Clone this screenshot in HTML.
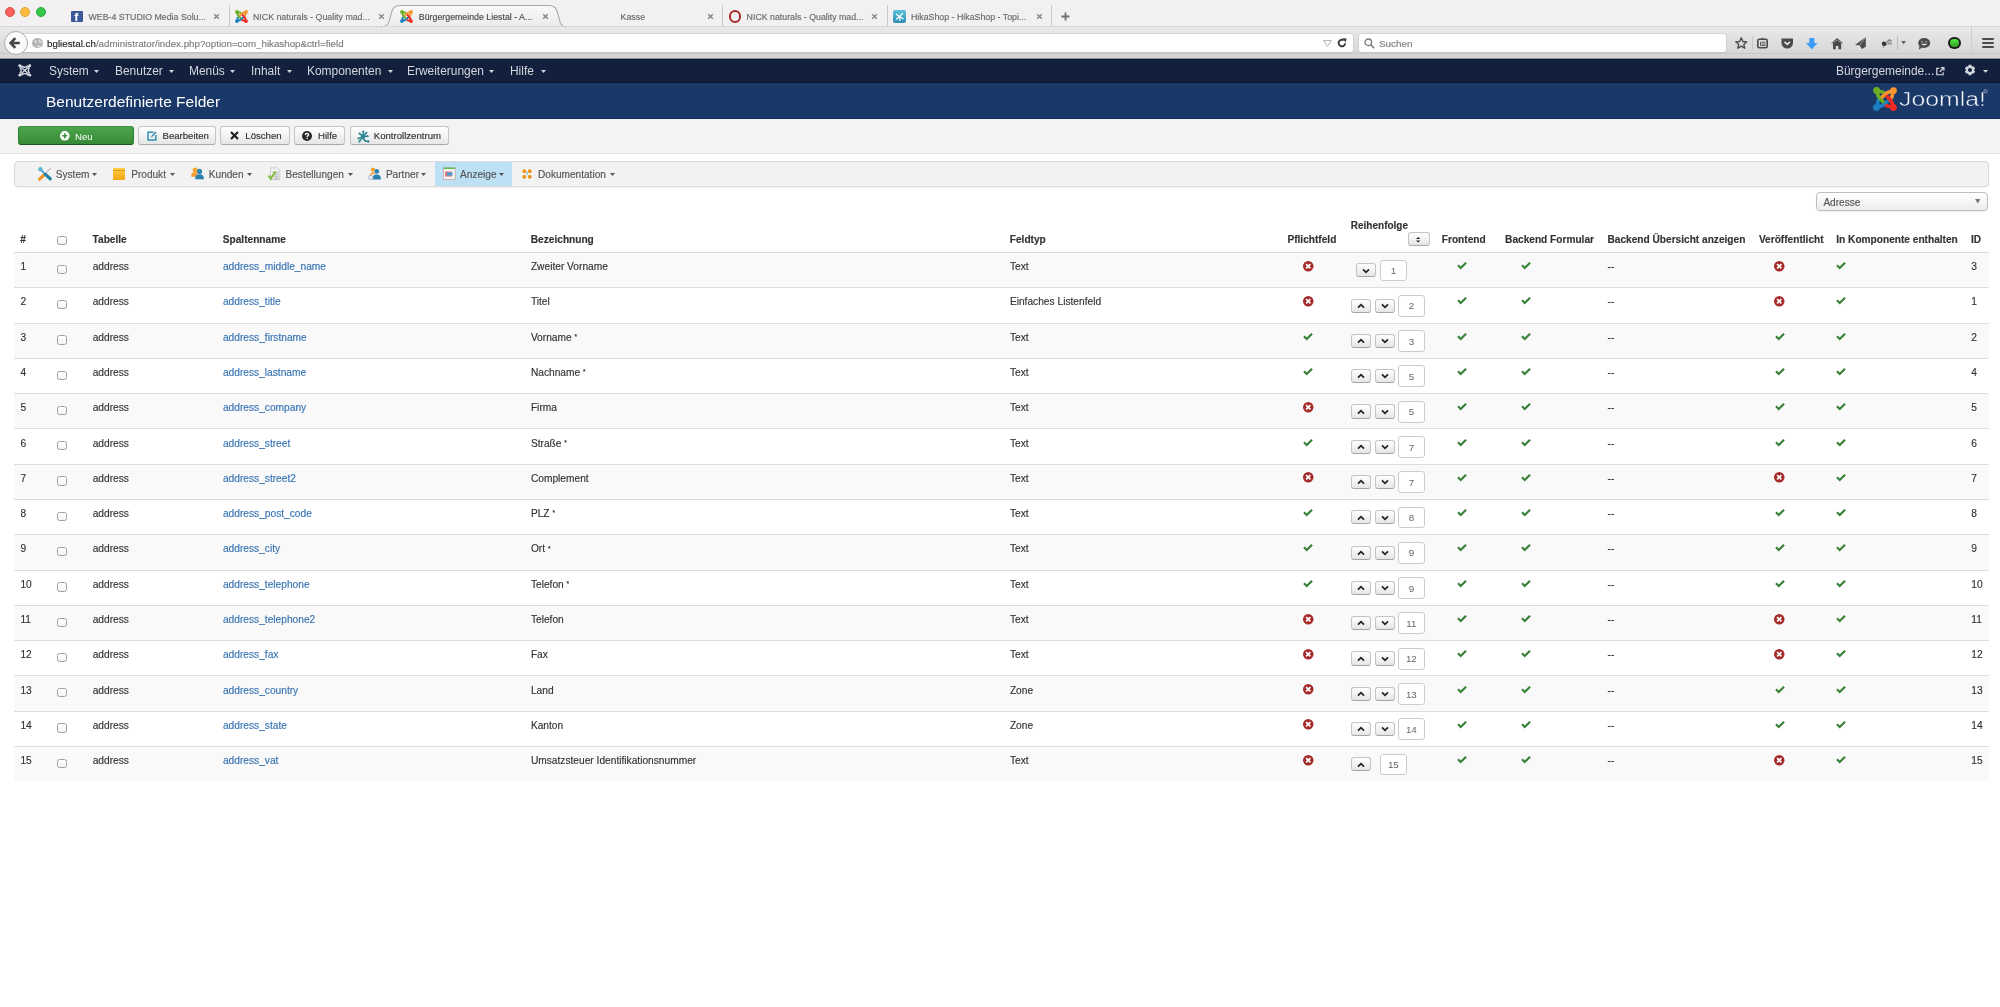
<!DOCTYPE html><html><head><meta charset="utf-8"><title>Benutzerdefinierte Felder</title><style>
*{box-sizing:border-box}
html,body{margin:0;padding:0;width:2000px;height:1007px;overflow:hidden;background:#fff;font-family:"Liberation Sans", sans-serif}
.a{position:absolute}
.t{position:absolute;white-space:nowrap;-webkit-text-stroke:0.15px currentColor}
svg{position:absolute;overflow:visible}
</style></head><body><div id="root" style="position:absolute;left:0;top:0;width:2000px;height:1007px;will-change:transform"><div class="a" style="left:0;top:0;width:2000px;height:26px;background:#f2f0f0"></div>
<div class="a" style="left:0;top:26px;width:2000px;height:1px;background:#d6d6d6"></div>
<div class="a" style="left:0;top:27px;width:2000px;height:32px;background:linear-gradient(#e9e9e9,#d3d3d3)"></div>
<div class="a" style="left:0;top:52.5px;width:2000px;height:1px;background:#c8c8c8"></div><div class="a" style="left:0;top:57px;width:2000px;height:1px;background:#dadada"></div><div class="a" style="left:0;top:58px;width:2000px;height:1px;background:#8a8f99"></div>
<div class="a" style="left:4.5px;top:6.5px;width:10px;height:10px;border-radius:50%;background:#fc605c;border:0.5px solid #de4c47"></div>
<div class="a" style="left:20px;top:6.5px;width:10px;height:10px;border-radius:50%;background:#fdbc40;border:0.5px solid #dea236"></div>
<div class="a" style="left:35.5px;top:6.5px;width:10px;height:10px;border-radius:50%;background:#34c84a;border:0.5px solid #27a83a"></div>
<svg style="left:0;top:0" width="2000" height="28"><defs><linearGradient id="tg" x1="0" y1="0" x2="0" y2="1"><stop offset="0" stop-color="#f8f8f8"/><stop offset="1" stop-color="#ebebeb"/></linearGradient></defs><path d="M381 26.8 C388 26.8 389 23 390.5 16 C392 9 394 5.5 400 5.5 L549 5.5 C555 5.5 557 9 558.5 16 C560 23 561 26.8 566 26.8 Z" fill="url(#tg)" stroke="#a9a9a9" stroke-width="1.1"/><rect x="382" y="26.4" width="183" height="1.6" fill="#ebebeb"/></svg>
<div class="a" style="left:228.5px;top:5px;width:1px;height:21px;background:#c9c7c7"></div>
<div class="a" style="left:722px;top:5px;width:1px;height:21px;background:#c9c7c7"></div>
<div class="a" style="left:886.5px;top:5px;width:1px;height:21px;background:#c9c7c7"></div>
<div class="a" style="left:1051px;top:5px;width:1px;height:21px;background:#c9c7c7"></div>
<div class="t" style="left:88.50px;top:12.75px;font-size:8.8px;line-height:8.8px;color:#6a6a6a;font-weight:400;">WEB-4 STUDIO Media Solu...</div>
<svg style="left:212.75px;top:13px" width="7" height="7" viewBox="0 0 7 7"><path d="M1.2 1.2L5.8 5.8M5.8 1.2L1.2 5.8" stroke="#858585" stroke-width="1.35"/></svg>
<div class="a" style="left:71px;top:11px;width:11.5px;height:11px;background:#3b5998;border-radius:1px"></div>
<div class="t" style="left:74.5px;top:11px;font-size:11px;line-height:13px;color:#fff;font-weight:700">f</div>
<div class="t" style="left:253.00px;top:12.75px;font-size:8.8px;line-height:8.8px;color:#6a6a6a;font-weight:400;">NICK naturals - Quality mad...</div>
<svg style="left:377.6px;top:13px" width="7" height="7" viewBox="0 0 7 7"><path d="M1.2 1.2L5.8 5.8M5.8 1.2L1.2 5.8" stroke="#858585" stroke-width="1.35"/></svg>
<svg style="left:235px;top:10px" width="13" height="13" viewBox="0 0 24 24"><g stroke-linecap="round" fill="none"><g transform="rotate(270 12 12)" fill="#1c7fbf"><g stroke="#1c7fbf"><circle stroke="none" cx="3.6" cy="3.5" r="3.4"/><path d="M3.7 3.8 L10.4 5.2" stroke-width="3.6"/><path d="M4 4 L5.2 9 L9.8 14.6" stroke-width="3.7" stroke-linejoin="round"/></g></g><g transform="rotate(0 12 12)" fill="#6aae24"><g stroke="#6aae24"><circle stroke="none" cx="3.6" cy="3.5" r="3.4"/><path d="M3.7 3.8 L10.4 5.2" stroke-width="3.6"/><path d="M4 4 L5.2 9 L9.8 14.6" stroke-width="3.7" stroke-linejoin="round"/></g></g><g transform="rotate(90 12 12)" fill="#f9962f"><g stroke="#f9962f"><circle stroke="none" cx="3.6" cy="3.5" r="3.4"/><path d="M3.7 3.8 L10.4 5.2" stroke-width="3.6"/><path d="M4 4 L5.2 9 L9.8 14.6" stroke-width="3.7" stroke-linejoin="round"/></g></g><g transform="rotate(180 12 12)" fill="#ee2b24"><g stroke="#ee2b24"><circle stroke="none" cx="3.6" cy="3.5" r="3.4"/><path d="M3.7 3.8 L10.4 5.2" stroke-width="3.6"/><path d="M4 4 L5.2 9 L9.8 14.6" stroke-width="3.7" stroke-linejoin="round"/></g></g></g></svg>
<div class="t" style="left:418.85px;top:12.75px;font-size:8.8px;line-height:8.8px;color:#4a4a4a;font-weight:400;">Bürgergemeinde Liestal - A...</div>
<svg style="left:542px;top:13px" width="7" height="7" viewBox="0 0 7 7"><path d="M1.2 1.2L5.8 5.8M5.8 1.2L1.2 5.8" stroke="#858585" stroke-width="1.35"/></svg>
<svg style="left:399.6px;top:10px" width="13" height="13" viewBox="0 0 24 24"><g stroke-linecap="round" fill="none"><g transform="rotate(270 12 12)" fill="#1c7fbf"><g stroke="#1c7fbf"><circle stroke="none" cx="3.6" cy="3.5" r="3.4"/><path d="M3.7 3.8 L10.4 5.2" stroke-width="3.6"/><path d="M4 4 L5.2 9 L9.8 14.6" stroke-width="3.7" stroke-linejoin="round"/></g></g><g transform="rotate(0 12 12)" fill="#6aae24"><g stroke="#6aae24"><circle stroke="none" cx="3.6" cy="3.5" r="3.4"/><path d="M3.7 3.8 L10.4 5.2" stroke-width="3.6"/><path d="M4 4 L5.2 9 L9.8 14.6" stroke-width="3.7" stroke-linejoin="round"/></g></g><g transform="rotate(90 12 12)" fill="#f9962f"><g stroke="#f9962f"><circle stroke="none" cx="3.6" cy="3.5" r="3.4"/><path d="M3.7 3.8 L10.4 5.2" stroke-width="3.6"/><path d="M4 4 L5.2 9 L9.8 14.6" stroke-width="3.7" stroke-linejoin="round"/></g></g><g transform="rotate(180 12 12)" fill="#ee2b24"><g stroke="#ee2b24"><circle stroke="none" cx="3.6" cy="3.5" r="3.4"/><path d="M3.7 3.8 L10.4 5.2" stroke-width="3.6"/><path d="M4 4 L5.2 9 L9.8 14.6" stroke-width="3.7" stroke-linejoin="round"/></g></g></g></svg>
<div class="t" style="left:620.60px;top:12.75px;font-size:8.8px;line-height:8.8px;color:#6a6a6a;font-weight:400;">Kasse</div>
<svg style="left:707px;top:13px" width="7" height="7" viewBox="0 0 7 7"><path d="M1.2 1.2L5.8 5.8M5.8 1.2L1.2 5.8" stroke="#858585" stroke-width="1.35"/></svg>
<div class="t" style="left:746.60px;top:12.75px;font-size:8.8px;line-height:8.8px;color:#6a6a6a;font-weight:400;">NICK naturals - Quality mad...</div>
<svg style="left:871px;top:13px" width="7" height="7" viewBox="0 0 7 7"><path d="M1.2 1.2L5.8 5.8M5.8 1.2L1.2 5.8" stroke="#858585" stroke-width="1.35"/></svg>
<div class="a" style="left:728.6px;top:10px;width:12.6px;height:12.6px;border-radius:50%;border:2.6px solid #a52a2a;background:transparent"></div>
<div class="t" style="left:911.00px;top:12.75px;font-size:8.8px;line-height:8.8px;color:#6a6a6a;font-weight:400;">HikaShop - HikaShop - Topi...</div>
<svg style="left:1036px;top:13px" width="7" height="7" viewBox="0 0 7 7"><path d="M1.2 1.2L5.8 5.8M5.8 1.2L1.2 5.8" stroke="#858585" stroke-width="1.35"/></svg>
<div class="a" style="left:893px;top:10px;width:12.7px;height:12.7px;border-radius:2px;background:linear-gradient(#5ac2dc,#2c8fb0)"></div>
<svg style="left:893px;top:10px" width="13" height="13" viewBox="0 0 13 13"><path d="M3 4L6.5 6.5M10 3L6.5 6.5L7 11M3 9.5L6.5 6.5L10.5 9" stroke="#fff" stroke-width="1.2" fill="none"/></svg>
<svg style="left:1060.7px;top:12px" width="9" height="9" viewBox="0 0 9 9"><path d="M4.5 0.5V8.5M0.5 4.5H8.5" stroke="#6f6f6f" stroke-width="1.8"/></svg>
<div class="a" style="left:20px;top:34px;width:1332.5px;height:18px;background:#fff;border-radius:2px;box-shadow:0 0 0 0.5px #c3c3c3, 0 1px 1px rgba(0,0,0,0.08)"></div>
<div class="a" style="left:3.5px;top:31px;width:24px;height:24px;border-radius:50%;background:#fafafa;border:1px solid #a9a9a9"></div>
<svg style="left:9.3px;top:37.2px" width="12" height="12" viewBox="0 0 12 12"><path d="M6.3 1.2L1.6 6L6.3 10.8M2 6H10.8" stroke="#444" stroke-width="2.6" fill="none" stroke-linejoin="miter"/></svg>
<div class="a" style="left:32.2px;top:37.8px;width:10.6px;height:10.6px;border-radius:50%;background:#b7b7b7"></div>
<svg style="left:32.2px;top:37.8px" width="11" height="11" viewBox="0 0 11 11"><path d="M3 2.5 Q4.5 3.5 3.8 5 M7 2 Q8 4 9.5 5 M5 8.5 Q6.5 7.5 8 9" stroke="#e8e8e8" stroke-width="1.4" fill="none"/></svg>
<div class="t" style="left:47.10px;top:38.95px;font-size:9.75px;line-height:9.75px;color:#7d7d7d;font-weight:400;"><span style="color:#1e1e1e">bgliestal.ch</span>/administrator/index.php?option=com_hikashop&amp;ctrl=field</div>
<svg style="left:1323px;top:40px" width="9" height="7" viewBox="0 0 9 7"><path d="M0.5 0.5H8.5L4.5 6.5Z" fill="none" stroke="#b3b3b3" stroke-width="1"/></svg>
<svg style="left:1337px;top:38px" width="10" height="10" viewBox="0 0 10 10"><path d="M8.2 5.2A3.3 3.3 0 1 1 6.8 2.3" stroke="#3a3a3a" stroke-width="1.9" fill="none"/><path d="M5.3 0.3L9.5 0.5L8.8 4.6Z" fill="#3a3a3a"/></svg>
<div class="a" style="left:1359px;top:34px;width:366.6px;height:18px;background:#fff;border-radius:2px;box-shadow:0 0 0 0.5px #c3c3c3, 0 1px 1px rgba(0,0,0,0.08)"></div>
<svg style="left:1364px;top:37.5px" width="11" height="11" viewBox="0 0 11 11"><circle cx="4.3" cy="4.3" r="3.3" stroke="#7a7a7a" stroke-width="1.3" fill="none"/><path d="M6.8 6.8L10.2 10.2" stroke="#7a7a7a" stroke-width="1.6"/></svg>
<div class="t" style="left:1379.00px;top:38.62px;font-size:9.9px;line-height:9.9px;color:#7f7f7f;font-weight:400;">Suchen</div>
<svg style="left:1735px;top:37px" width="12.5" height="12" viewBox="0 0 24 23"><path d="M12 1.5L15 8.6L22.6 9.2L16.8 14.2L18.6 21.6L12 17.6L5.4 21.6L7.2 14.2L1.4 9.2L9 8.6Z" fill="none" stroke="#4a4a4a" stroke-width="2.6" stroke-linejoin="round"/></svg>
<div class="a" style="left:1751.5px;top:36px;width:1px;height:14px;background:#c8c8c8"></div>
<svg style="left:1757px;top:37px" width="11" height="11.5" viewBox="0 0 11 11.5"><rect x="0.8" y="2.3" width="9.4" height="8.5" rx="1.5" fill="none" stroke="#4a4a4a" stroke-width="1.6"/><path d="M4 2.3L5.5 0.6L7 2.3" fill="#4a4a4a"/><path d="M3.5 4.8V9M4.5 5.2H8.5M4.5 7H8.5M4.5 8.6H8.5" stroke="#4a4a4a" stroke-width="0.9"/></svg>
<svg style="left:1780.5px;top:37.5px" width="12.5" height="11" viewBox="0 0 12.5 11"><path d="M0.5 0.5H12V5A5.75 5.5 0 0 1 0.5 5Z" fill="#4a4a4a"/><path d="M3.5 3.8L6.25 6.3L9 3.8" stroke="#e3e3e3" stroke-width="1.6" fill="none"/></svg>
<svg style="left:1806px;top:37.6px" width="11.6" height="11.2" viewBox="0 0 11.6 11.2"><path d="M3.3 0H8.3V5H11.6L5.8 11.2L0 5H3.3Z" fill="#3c9cf7"/></svg>
<svg style="left:1830.8px;top:37.6px" width="12.2" height="11.2" viewBox="0 0 12.2 11.2"><path d="M0 5.6L6.1 0L12.2 5.6L11 5.6L6.1 1.6L1.2 5.6Z" fill="#4a4a4a"/><path d="M2 5.2L6.1 2L10.2 5.2V11.2H7.4V8H4.8V11.2H2Z" fill="#4a4a4a"/></svg>
<svg style="left:1855.3px;top:37px" width="11" height="12" viewBox="0 0 11 12"><path d="M10.8 0L0 8.1L4.4 8.3L7 12L10.8 9.7Z" fill="#4a4a4a"/><path d="M4.4 8.3L10.8 0" stroke="#ddd" stroke-width="0.6"/></svg>
<svg style="left:1881px;top:38.2px" width="12" height="10" viewBox="0 0 12 10"><ellipse cx="3.2" cy="5.8" rx="2.4" ry="2.2" fill="#333"/><path d="M4 5L9 2M5 6L11 6M3 8L2 10M8 1L10 3" stroke="#777" stroke-width="0.8"/><ellipse cx="8.5" cy="3.5" rx="2" ry="1.5" fill="none" stroke="#666" stroke-width="0.8"/></svg>
<div class="a" style="left:1897.4px;top:36px;width:1px;height:13.6px;background:#bdbdbd"></div>
<svg style="left:1901.2px;top:41.1px" width="5.2" height="3.3" viewBox="0 0 5.2 3.3"><path d="M0 0H5.2L2.6 3.3Z" fill="#666"/></svg>
<svg style="left:1917.8px;top:37.5px" width="12.4" height="11.4" viewBox="0 0 12.4 11.4"><ellipse cx="6.2" cy="5" rx="6" ry="5" fill="#4a4a4a"/><path d="M1.5 8L0.8 11.4L4.5 9.4Z" fill="#4a4a4a"/><rect x="3.4" y="3.2" width="1.3" height="1.1" fill="#ddd"/><rect x="7.7" y="3.2" width="1.3" height="1.1" fill="#ddd"/><path d="M2.8 5.8Q6.2 9.3 9.6 5.8Z" fill="#ddd"/></svg>
<div class="a" style="left:1948px;top:36.5px;width:13px;height:12.8px;border-radius:50%;background:#1c1c1c"></div><div class="a" style="left:1950.3px;top:38.8px;width:8.4px;height:8.2px;border-radius:50%;background:linear-gradient(#55ee44,#2f9a24)"></div>
<div class="a" style="left:1971.4px;top:26px;width:1px;height:32px;background:#cdcdcd"></div>
<div class="a" style="left:1981.8px;top:37.7px;width:12.4px;height:2.1px;border-radius:1px;background:#4a4a4a"></div>
<div class="a" style="left:1981.8px;top:41.6px;width:12.4px;height:2.1px;border-radius:1px;background:#4a4a4a"></div>
<div class="a" style="left:1981.8px;top:45.6px;width:12.4px;height:2.1px;border-radius:1px;background:#4a4a4a"></div>
<div class="a" style="left:0;top:59px;width:2000px;height:24px;background:#12203e"></div><div class="a" style="left:0;top:59px;width:2000px;height:1px;background:#0b1a38"></div>
<div class="a" style="left:0;top:82px;width:2000px;height:1px;background:#0c1630"></div>
<div class="a" style="left:0;top:83px;width:2000px;height:36px;background:#1a3868"></div><div class="a" style="left:0;top:118px;width:2000px;height:1px;background:#0d2a5a"></div>
<svg style="left:17.5px;top:64px" width="13.5" height="12.8" viewBox="0 0 24 23"><g stroke="#d9dce3" stroke-width="2.4" fill="none" stroke-linecap="round"><path d="M3 3L21 20M21 3L3 20M7 3.5Q12 8 17 3.5M7 19.5Q12 15 17 19.5M3.5 7Q8 11.5 3.5 16M20.5 7Q16 11.5 20.5 16"/></g><g fill="#d9dce3"><circle cx="3" cy="3" r="2.6"/><circle cx="21" cy="3" r="2.6"/><circle cx="3" cy="20" r="2.6"/><circle cx="21" cy="20" r="2.6"/></g></svg>
<div class="t" style="left:48.95px;top:65.42px;font-size:12.5px;line-height:12.5px;color:#d4d7de;font-weight:400;transform:scaleX(0.955);transform-origin:0 0;-webkit-text-stroke:0;">System</div>
<svg style="left:94.3px;top:69.8px" width="5" height="3" viewBox="0 0 5 3"><path d="M0 0H5L2.5 3Z" fill="#d4d7de"/></svg>
<div class="t" style="left:114.95px;top:65.42px;font-size:12.5px;line-height:12.5px;color:#d4d7de;font-weight:400;transform:scaleX(0.955);transform-origin:0 0;-webkit-text-stroke:0;">Benutzer</div>
<svg style="left:169px;top:69.8px" width="5" height="3" viewBox="0 0 5 3"><path d="M0 0H5L2.5 3Z" fill="#d4d7de"/></svg>
<div class="t" style="left:188.70px;top:65.42px;font-size:12.5px;line-height:12.5px;color:#d4d7de;font-weight:400;transform:scaleX(0.955);transform-origin:0 0;-webkit-text-stroke:0;">Menüs</div>
<svg style="left:230.3px;top:69.8px" width="5" height="3" viewBox="0 0 5 3"><path d="M0 0H5L2.5 3Z" fill="#d4d7de"/></svg>
<div class="t" style="left:250.70px;top:65.42px;font-size:12.5px;line-height:12.5px;color:#d4d7de;font-weight:400;transform:scaleX(0.955);transform-origin:0 0;-webkit-text-stroke:0;">Inhalt</div>
<svg style="left:287px;top:69.8px" width="5" height="3" viewBox="0 0 5 3"><path d="M0 0H5L2.5 3Z" fill="#d4d7de"/></svg>
<div class="t" style="left:306.70px;top:65.42px;font-size:12.5px;line-height:12.5px;color:#d4d7de;font-weight:400;transform:scaleX(0.955);transform-origin:0 0;-webkit-text-stroke:0;">Komponenten</div>
<svg style="left:387.5px;top:69.8px" width="5" height="3" viewBox="0 0 5 3"><path d="M0 0H5L2.5 3Z" fill="#d4d7de"/></svg>
<div class="t" style="left:407.20px;top:65.42px;font-size:12.5px;line-height:12.5px;color:#d4d7de;font-weight:400;transform:scaleX(0.955);transform-origin:0 0;-webkit-text-stroke:0;">Erweiterungen</div>
<svg style="left:489px;top:69.8px" width="5" height="3" viewBox="0 0 5 3"><path d="M0 0H5L2.5 3Z" fill="#d4d7de"/></svg>
<div class="t" style="left:509.70px;top:65.42px;font-size:12.5px;line-height:12.5px;color:#d4d7de;font-weight:400;transform:scaleX(0.955);transform-origin:0 0;-webkit-text-stroke:0;">Hilfe</div>
<svg style="left:541px;top:69.8px" width="5" height="3" viewBox="0 0 5 3"><path d="M0 0H5L2.5 3Z" fill="#d4d7de"/></svg>
<div class="t" style="left:1836.00px;top:65.42px;font-size:12.5px;line-height:12.5px;color:#d4d7de;font-weight:400;transform:scaleX(0.955);transform-origin:0 0;-webkit-text-stroke:0;">Bürgergemeinde...</div>
<svg style="left:1936px;top:67px" width="8.5" height="8.5" viewBox="0 0 9 9"><path d="M3.5 1.5H0.8V8.2H7.5V5.5" stroke="#d4d7de" stroke-width="1.3" fill="none"/><path d="M4 5L8 1M5 0.6H8.4V4" stroke="#d4d7de" stroke-width="1.3" fill="none"/></svg>
<svg style="left:1963.8px;top:63.9px" width="12" height="12" viewBox="0 0 12 12"><path fill="#d4d7de" fill-rule="evenodd" d="M4.05 2.62L4.81 0.84L7.19 0.84L7.95 2.62L7.95 2.62L9.88 2.39L11.07 4.45L9.90 6.00L9.90 6.00L11.07 7.55L9.88 9.61L7.95 9.38L7.95 9.38L7.19 11.16L4.81 11.16L4.05 9.38L4.05 9.38L2.12 9.61L0.93 7.55L2.10 6.00L2.10 6.00L0.93 4.45L2.12 2.39L4.05 2.62Z M8 6A2 2 0 1 0 4 6A2 2 0 1 0 8 6Z"/></svg>
<svg style="left:1983.2px;top:70.2px" width="5.2" height="2.8" viewBox="0 0 5.2 2.8"><path d="M0 0H5.2L2.6 2.8Z" fill="#d4d7de"/></svg>
<div class="t" style="left:46.00px;top:94.08px;font-size:15.5px;line-height:15.5px;color:#ffffff;font-weight:400;-webkit-text-stroke:0;">Benutzerdefinierte Felder</div>
<svg style="left:1873px;top:87px" width="24" height="24" viewBox="0 0 24 24"><g stroke-linecap="round" fill="none"><g transform="rotate(270 12 12)" fill="#1c7fbf"><g stroke="#1c7fbf"><circle stroke="none" cx="3.6" cy="3.5" r="3.4"/><path d="M3.7 3.8 L10.4 5.2" stroke-width="3.6"/><path d="M4 4 L5.2 9 L9.8 14.6" stroke-width="3.7" stroke-linejoin="round"/></g></g><g transform="rotate(0 12 12)" fill="#6aae24"><g stroke="#6aae24"><circle stroke="none" cx="3.6" cy="3.5" r="3.4"/><path d="M3.7 3.8 L10.4 5.2" stroke-width="3.6"/><path d="M4 4 L5.2 9 L9.8 14.6" stroke-width="3.7" stroke-linejoin="round"/></g></g><g transform="rotate(90 12 12)" fill="#f9962f"><g stroke="#f9962f"><circle stroke="none" cx="3.6" cy="3.5" r="3.4"/><path d="M3.7 3.8 L10.4 5.2" stroke-width="3.6"/><path d="M4 4 L5.2 9 L9.8 14.6" stroke-width="3.7" stroke-linejoin="round"/></g></g><g transform="rotate(180 12 12)" fill="#ee2b24"><g stroke="#ee2b24"><circle stroke="none" cx="3.6" cy="3.5" r="3.4"/><path d="M3.7 3.8 L10.4 5.2" stroke-width="3.6"/><path d="M4 4 L5.2 9 L9.8 14.6" stroke-width="3.7" stroke-linejoin="round"/></g></g></g></svg>
<svg style="left:1899px;top:86px" width="90" height="24"><text x="0" y="19.7" textLength="87" lengthAdjust="spacingAndGlyphs" font-family="Liberation Sans" font-size="20" fill="#f4f6fa" stroke="#1a3868" stroke-width="0.45">Joomla!</text><circle cx="86.5" cy="5.2" r="1.6" fill="none" stroke="#dfe4ec" stroke-width="0.6"/></svg>
<div class="a" style="left:0;top:119px;width:2000px;height:34px;background:#f3f3f3"></div>
<div class="a" style="left:0;top:153px;width:2000px;height:1px;background:#e2e2e2"></div>
<div class="a" style="left:18px;top:126px;width:115.5px;height:19px;border-radius:3px;background:linear-gradient(#4da54d,#378a37);border:1px solid #2f7d2f;border-top-color:#3f933f;border-bottom-color:#1f561f"></div>
<svg style="left:60px;top:130.6px" width="9.6" height="9.6" viewBox="0 0 10 10"><circle cx="5" cy="5" r="5" fill="#fff"/><path d="M5 2.3V7.7M2.3 5H7.7" stroke="#3e963e" stroke-width="1.7"/></svg>
<div class="t" style="left:75.00px;top:131.57px;font-size:9.6px;line-height:9.6px;color:#ffffff;font-weight:400;-webkit-text-stroke:0;">Neu</div>
<div class="a" style="left:138.3px;top:126px;width:77.5px;height:19px;border-radius:3px;background:linear-gradient(#ffffff,#e6e6e6);border:1px solid #c5c5c5;border-bottom-color:#a8a8a8"></div>
<div class="a" style="left:220.4px;top:126px;width:69.29999999999998px;height:19px;border-radius:3px;background:linear-gradient(#ffffff,#e6e6e6);border:1px solid #c5c5c5;border-bottom-color:#a8a8a8"></div>
<div class="a" style="left:294.2px;top:126px;width:51.10000000000002px;height:19px;border-radius:3px;background:linear-gradient(#ffffff,#e6e6e6);border:1px solid #c5c5c5;border-bottom-color:#a8a8a8"></div>
<div class="a" style="left:349.5px;top:126px;width:99.0px;height:19px;border-radius:3px;background:linear-gradient(#ffffff,#e6e6e6);border:1px solid #c5c5c5;border-bottom-color:#a8a8a8"></div>
<div class="t" style="left:162.50px;top:131.17px;font-size:9.6px;line-height:9.6px;color:#333;font-weight:400;">Bearbeiten</div>
<div class="t" style="left:245.30px;top:131.17px;font-size:9.6px;line-height:9.6px;color:#333;font-weight:400;">Löschen</div>
<div class="t" style="left:318.00px;top:131.17px;font-size:9.6px;line-height:9.6px;color:#333;font-weight:400;">Hilfe</div>
<div class="t" style="left:373.80px;top:131.17px;font-size:9.6px;line-height:9.6px;color:#333;font-weight:400;">Kontrollzentrum</div>
<svg style="left:146.5px;top:130.5px" width="10" height="10" viewBox="0 0 10 10"><path d="M6.5 1.2H1V9H8.8V4" stroke="#2d8fb5" stroke-width="1.5" fill="none"/><path d="M4 6.5L4.4 4.8L8.6 0.6L9.6 1.6L5.4 5.8Z" fill="#2d8fb5"/></svg>
<svg style="left:229.8px;top:130.8px" width="9" height="9" viewBox="0 0 9 9"><path d="M1 1L8 8M8 1L1 8" stroke="#222" stroke-width="2.2"/></svg>
<svg style="left:302.4px;top:130.6px" width="10" height="10" viewBox="0 0 10 10"><circle cx="5" cy="5" r="5" fill="#2a2a2a"/><path d="M3.4 3.9Q3.4 2.3 5 2.3Q6.6 2.3 6.6 3.7Q6.6 4.6 5.2 5.1V6" stroke="#fff" stroke-width="1.3" fill="none"/><rect x="4.5" y="6.7" width="1.3" height="1.2" fill="#fff"/></svg>
<svg style="left:356px;top:129px" width="14" height="15" viewBox="0 0 14 15"><g stroke="#2b8692" stroke-width="1.5" stroke-linecap="round" fill="none"><path d="M7.1 7.6L7.3 2.6M7.1 7.6L3.5 4.5M7.1 7.6L10.4 3.7M7.1 7.6L11.6 7.2M7.1 7.6L2.5 9.4M7.1 7.6L3.4 12.4M7.1 7.6Q7.4 12.4 12.4 12.5"/></g><g fill="#2b8692"><circle cx="7.1" cy="7.6" r="2.2"/><circle cx="7.3" cy="2.6" r="1.05"/><circle cx="3.5" cy="4.5" r="1.05"/><circle cx="10.4" cy="3.7" r="1.05"/><circle cx="11.6" cy="7.2" r="1"/><circle cx="2.5" cy="9.4" r="1"/><circle cx="3.4" cy="12.4" r="1"/><circle cx="12.4" cy="12.4" r="1.1"/></g></svg>
<div class="a" style="left:14px;top:161px;width:1974.5px;height:25.5px;border-radius:4px;background:#f2f2f2;border:1px solid #d9d9d9;box-shadow:0 1px 2px rgba(0,0,0,0.06)"></div>
<div class="a" style="left:435px;top:162px;width:77.3px;height:23.5px;background:#bde1f4"></div>
<div class="t" style="left:55.80px;top:170.05px;font-size:10.1px;line-height:10.1px;color:#555;font-weight:400;">System</div>
<svg style="left:92.4px;top:172.6px" width="5" height="3" viewBox="0 0 5 3"><path d="M0 0H5L2.5 3Z" fill="#555"/></svg>
<div class="t" style="left:131.20px;top:170.05px;font-size:10.1px;line-height:10.1px;color:#555;font-weight:400;">Produkt</div>
<svg style="left:169.8px;top:172.6px" width="5" height="3" viewBox="0 0 5 3"><path d="M0 0H5L2.5 3Z" fill="#555"/></svg>
<div class="t" style="left:208.80px;top:170.05px;font-size:10.1px;line-height:10.1px;color:#555;font-weight:400;">Kunden</div>
<svg style="left:247px;top:172.6px" width="5" height="3" viewBox="0 0 5 3"><path d="M0 0H5L2.5 3Z" fill="#555"/></svg>
<div class="t" style="left:285.50px;top:170.05px;font-size:10.1px;line-height:10.1px;color:#555;font-weight:400;">Bestellungen</div>
<svg style="left:347.8px;top:172.6px" width="5" height="3" viewBox="0 0 5 3"><path d="M0 0H5L2.5 3Z" fill="#555"/></svg>
<div class="t" style="left:385.90px;top:170.05px;font-size:10.1px;line-height:10.1px;color:#555;font-weight:400;">Partner</div>
<svg style="left:421px;top:172.6px" width="5" height="3" viewBox="0 0 5 3"><path d="M0 0H5L2.5 3Z" fill="#555"/></svg>
<div class="t" style="left:460.10px;top:170.05px;font-size:10.1px;line-height:10.1px;color:#555;font-weight:400;">Anzeige</div>
<svg style="left:499px;top:172.6px" width="5" height="3" viewBox="0 0 5 3"><path d="M0 0H5L2.5 3Z" fill="#555"/></svg>
<div class="t" style="left:538.00px;top:170.05px;font-size:10.1px;line-height:10.1px;color:#555;font-weight:400;">Dokumentation</div>
<svg style="left:610px;top:172.6px" width="5" height="3" viewBox="0 0 5 3"><path d="M0 0H5L2.5 3Z" fill="#555"/></svg>
<svg style="left:37.8px;top:167.4px" width="14" height="13" viewBox="0 0 14 13"><path d="M13.2 0.6L7 7" stroke="#a9a9a9" stroke-width="1"/><path d="M6.6 7.4L1.6 12.2" stroke="#f0962a" stroke-width="3.2" stroke-linecap="round"/><path d="M2.4 2.4L7.4 7.4" stroke="#3fa3c8" stroke-width="1.8"/><circle cx="2.4" cy="2.2" r="2.2" fill="#5ab6d6"/><path d="M7.4 7.4L12.2 11.8" stroke="#2283a8" stroke-width="3.2" stroke-linecap="round"/></svg>
<div class="a" style="left:113.4px;top:167.5px;width:12px;height:12.5px;border-radius:1px;background:linear-gradient(#ffcf4a,#f3a712)"></div><div class="a" style="left:113.4px;top:170px;width:12px;height:1px;background:#e49a10"></div>
<svg style="left:190.8px;top:167.3px" width="13.2" height="12.7" viewBox="0 0 13 13"><circle cx="4" cy="3" r="2.6" fill="#f4a430"/><path d="M0 9Q0 5.5 4 5.5Q6 5.5 6.5 7L5 10H0Z" fill="#f29a2e"/><circle cx="8.5" cy="4.5" r="2.6" fill="#2d86b5"/><path d="M4 12.5Q4 7.5 8.5 7.5Q13 7.5 13 12.5Z" fill="#2b7fae"/></svg>
<svg style="left:268px;top:167px" width="12.5" height="13" viewBox="0 0 12.5 13"><path d="M2.5 0.8H9.2L11.8 3.4V12.5H2.5Z" fill="#f2f2f2" stroke="#c2c2c2" stroke-width="0.8"/><path d="M4.5 5.2H10.5M5 7.2H10.5M5.5 9.2H10.5M6 11.2H10.5" stroke="#9a9a9a" stroke-width="0.8"/><path d="M0.6 8.6L2.6 12L7.4 4.6" stroke="#7cc03a" stroke-width="1.9" fill="none"/></svg>
<svg style="left:368px;top:167px" width="13" height="13" viewBox="0 0 13 13"><circle cx="5" cy="2.6" r="2.2" fill="#f4a430"/><circle cx="8.8" cy="4.4" r="2.4" fill="#2d86b5"/><path d="M4.3 12.5Q4.3 7.5 8.8 7.5Q13 7.5 13 12.5Z" fill="#2b7fae"/><path d="M2 12.5Q2 6 5 6Q6 6 6.6 7" stroke="#f29a2e" stroke-width="1.5" fill="none"/><circle cx="2.8" cy="10.5" r="2.2" fill="#e8eef5" stroke="#8fa9c4" stroke-width="0.7"/></svg>
<svg style="left:442.7px;top:167px" width="12.6" height="13" viewBox="0 0 12.6 13"><rect x="0.4" y="1" width="11.8" height="11.5" fill="#f3f3f3" stroke="#c4a7a7" stroke-width="0.8"/><rect x="0.4" y="0.5" width="11.8" height="1.4" fill="#57b847"/><rect x="2" y="4.5" width="7" height="5" fill="#d94f4f" opacity="0.75"/><rect x="4" y="5.5" width="5.5" height="3" fill="#3f9bd6"/></svg>
<svg style="left:521.5px;top:168.8px" width="10" height="10" viewBox="0 0 10 10"><circle cx="5" cy="5" r="4.6" fill="#fbfbfb"/><g fill="#e8961c"><circle cx="2.3" cy="2.3" r="2"/><circle cx="7.7" cy="2.3" r="2"/><circle cx="2.3" cy="7.7" r="2"/><circle cx="7.7" cy="7.7" r="2"/></g><circle cx="5" cy="5" r="1.8" fill="#f4f8fb"/><path d="M4.2 4.3Q4.4 3.4 5.2 3.5Q6 3.7 5.6 4.6L5 5.5V6.2" stroke="#5aa9d0" stroke-width="0.9" fill="none"/></svg>
<div class="a" style="left:1816px;top:191.5px;width:172px;height:19.2px;border-radius:4px;background:linear-gradient(#ffffff 0%,#f6f6f6 50%,#ececec 100%);border:1px solid #bdbdbd;box-shadow:0 1px 1px rgba(0,0,0,0.06)"></div>
<div class="t" style="left:1823.40px;top:198.25px;font-size:10.1px;line-height:10.1px;color:#555;font-weight:400;">Adresse</div>
<svg style="left:1975px;top:198.6px" width="5.5" height="4.5" viewBox="0 0 5.5 4.5"><path d="M0 0H5.5L2.75 4.5Z" fill="#7a7a7a"/></svg>
<div class="t" style="left:20.30px;top:234.71px;font-size:10.15px;line-height:10.15px;color:#333;font-weight:700;">#</div>
<div class="t" style="left:92.60px;top:234.71px;font-size:10.15px;line-height:10.15px;color:#333;font-weight:700;">Tabelle</div>
<div class="t" style="left:222.80px;top:234.71px;font-size:10.15px;line-height:10.15px;color:#333;font-weight:700;">Spaltenname</div>
<div class="t" style="left:530.80px;top:234.71px;font-size:10.15px;line-height:10.15px;color:#333;font-weight:700;">Bezeichnung</div>
<div class="t" style="left:1009.80px;top:234.71px;font-size:10.15px;line-height:10.15px;color:#333;font-weight:700;">Feldtyp</div>
<div class="t" style="left:1287.40px;top:234.71px;font-size:10.15px;line-height:10.15px;color:#333;font-weight:700;">Pflichtfeld</div>
<div class="t" style="left:1441.80px;top:234.71px;font-size:10.15px;line-height:10.15px;color:#333;font-weight:700;">Frontend</div>
<div class="t" style="left:1505.10px;top:234.71px;font-size:10.15px;line-height:10.15px;color:#333;font-weight:700;">Backend Formular</div>
<div class="t" style="left:1607.50px;top:234.71px;font-size:10.15px;line-height:10.15px;color:#333;font-weight:700;">Backend Übersicht anzeigen</div>
<div class="t" style="left:1758.90px;top:234.71px;font-size:10.15px;line-height:10.15px;color:#333;font-weight:700;">Veröffentlicht</div>
<div class="t" style="left:1836.30px;top:234.71px;font-size:10.15px;line-height:10.15px;color:#333;font-weight:700;">In Komponente enthalten</div>
<div class="t" style="left:1971.00px;top:234.71px;font-size:10.15px;line-height:10.15px;color:#333;font-weight:700;">ID</div>
<div class="t" style="left:1350.80px;top:221.23px;font-size:10px;line-height:10px;color:#333;font-weight:700;">Reihenfolge</div>
<div class="a" style="left:1408.3px;top:232.1px;width:21.3px;height:13.6px;border-radius:3px;background:linear-gradient(#fff,#e6e6e6);border:1px solid #c4c4c4;border-bottom-color:#aaa"></div>
<svg style="left:1415.9px;top:236.9px" width="4.4" height="5.6" viewBox="0 0 4.4 5.6"><path d="M0 2.1L2.2 0.1L4.4 2.1ZM0 3.4L2.2 5.4L4.4 3.4Z" fill="#2a2a2a"/></svg>
<div class="a" style="left:57px;top:236.2px;width:9.6px;height:9.3px;border-radius:2.5px;border:1px solid #a0a0a0;background:linear-gradient(#fff,#f3f3f3)"></div>
<div class="a" style="left:14px;top:252.000px;width:1974.5px;height:35.286px;background:#f9f9f9"></div>
<div class="a" style="left:14px;top:252.000px;width:1974.5px;height:1px;background:#dddddd"></div>
<div class="t" style="left:20.40px;top:262.07px;font-size:10.2px;line-height:10.2px;color:#333;font-weight:400;">1</div>
<div class="a" style="left:57.2px;top:264.7px;width:9.6px;height:9.3px;border-radius:2.5px;border:1px solid #a0a0a0;background:linear-gradient(#fff,#f3f3f3)"></div>
<div class="t" style="left:92.70px;top:262.07px;font-size:10.2px;line-height:10.2px;color:#333;font-weight:400;">address</div>
<div class="t" style="left:222.90px;top:262.07px;font-size:10.2px;line-height:10.2px;color:#3673b3;font-weight:400;">address_middle_name</div>
<div class="t" style="left:530.90px;top:262.07px;font-size:10.2px;line-height:10.2px;color:#333;font-weight:400;">Zweiter Vorname</div>
<div class="t" style="left:1009.90px;top:262.07px;font-size:10.2px;line-height:10.2px;color:#333;font-weight:400;">Text</div>
<svg style="left:1302.75px;top:260.65px" width="10.5" height="10.5" viewBox="0 0 10.5 10.5"><circle cx="5.25" cy="5.25" r="5.25" fill="#a52a2a"/><path d="M3.1 3.1L7.4 7.4M7.4 3.1L3.1 7.4" stroke="#fff" stroke-width="1.7"/></svg>
<div class="a" style="left:1356.2px;top:263.3px;width:20px;height:14.1px;border-radius:3px;background:linear-gradient(#fff,#e6e6e6);border:1px solid #c4c4c4;border-bottom-color:#a5a5a5"></div><svg style="left:1362.2px;top:267.6px" width="8" height="6" viewBox="0 0 8 6"><path d="M1 1.4L4 4.4L7 1.4" stroke="#222" stroke-width="1.7" fill="none"/></svg>
<div class="a" style="left:1380.4px;top:259.6px;width:26.4px;height:21.8px;border-radius:3px;background:#fff;border:1px solid #ccc"></div><div class="t" style="left:1380.4px;top:265.20000000000005px;width:26.4px;text-align:center;font-size:9.8px;line-height:11px;color:#666;-webkit-text-stroke:0">1</div>
<svg style="left:1457.4px;top:262.1px" width="10" height="7.8" viewBox="0 0 10 7.8"><path d="M0.2 3.9L1.7 2.4L3.7 4.4L8.3 0L9.8 1.5L3.7 7.6Z" fill="#378137"/></svg>
<svg style="left:1521.1px;top:262.1px" width="10" height="7.8" viewBox="0 0 10 7.8"><path d="M0.2 3.9L1.7 2.4L3.7 4.4L8.3 0L9.8 1.5L3.7 7.6Z" fill="#378137"/></svg>
<div class="t" style="left:1607.60px;top:262.07px;font-size:10.2px;line-height:10.2px;color:#333;font-weight:400;">--</div>
<svg style="left:1774.45px;top:260.65px" width="10.5" height="10.5" viewBox="0 0 10.5 10.5"><circle cx="5.25" cy="5.25" r="5.25" fill="#a52a2a"/><path d="M3.1 3.1L7.4 7.4M7.4 3.1L3.1 7.4" stroke="#fff" stroke-width="1.7"/></svg>
<svg style="left:1836px;top:262.1px" width="10" height="7.8" viewBox="0 0 10 7.8"><path d="M0.2 3.9L1.7 2.4L3.7 4.4L8.3 0L9.8 1.5L3.7 7.6Z" fill="#378137"/></svg>
<div class="t" style="left:1971.30px;top:262.07px;font-size:10.2px;line-height:10.2px;color:#333;font-weight:400;">3</div>
<div class="a" style="left:14px;top:287.286px;width:1974.5px;height:35.286px;background:#ffffff"></div>
<div class="a" style="left:14px;top:287.286px;width:1974.5px;height:1px;background:#dddddd"></div>
<div class="t" style="left:20.40px;top:297.35px;font-size:10.2px;line-height:10.2px;color:#333;font-weight:400;">2</div>
<div class="a" style="left:57.2px;top:299.986px;width:9.6px;height:9.3px;border-radius:2.5px;border:1px solid #a0a0a0;background:linear-gradient(#fff,#f3f3f3)"></div>
<div class="t" style="left:92.70px;top:297.35px;font-size:10.2px;line-height:10.2px;color:#333;font-weight:400;">address</div>
<div class="t" style="left:222.90px;top:297.35px;font-size:10.2px;line-height:10.2px;color:#3673b3;font-weight:400;">address_title</div>
<div class="t" style="left:530.90px;top:297.35px;font-size:10.2px;line-height:10.2px;color:#333;font-weight:400;">Titel</div>
<div class="t" style="left:1009.90px;top:297.35px;font-size:10.2px;line-height:10.2px;color:#333;font-weight:400;">Einfaches Listenfeld</div>
<svg style="left:1302.75px;top:295.936px" width="10.5" height="10.5" viewBox="0 0 10.5 10.5"><circle cx="5.25" cy="5.25" r="5.25" fill="#a52a2a"/><path d="M3.1 3.1L7.4 7.4M7.4 3.1L3.1 7.4" stroke="#fff" stroke-width="1.7"/></svg>
<div class="a" style="left:1351.3px;top:298.586px;width:20px;height:14.1px;border-radius:3px;background:linear-gradient(#fff,#e6e6e6);border:1px solid #c4c4c4;border-bottom-color:#a5a5a5"></div><svg style="left:1357.3px;top:302.886px" width="8" height="6" viewBox="0 0 8 6"><path d="M1 4.6L4 1.6L7 4.6" stroke="#222" stroke-width="1.7" fill="none"/></svg>
<div class="a" style="left:1374.6px;top:298.586px;width:20px;height:14.1px;border-radius:3px;background:linear-gradient(#fff,#e6e6e6);border:1px solid #c4c4c4;border-bottom-color:#a5a5a5"></div><svg style="left:1380.6px;top:302.886px" width="8" height="6" viewBox="0 0 8 6"><path d="M1 1.4L4 4.4L7 1.4" stroke="#222" stroke-width="1.7" fill="none"/></svg>
<div class="a" style="left:1398.2px;top:294.886px;width:26.4px;height:21.8px;border-radius:3px;background:#fff;border:1px solid #ccc"></div><div class="t" style="left:1398.2px;top:300.48600000000005px;width:26.4px;text-align:center;font-size:9.8px;line-height:11px;color:#666;-webkit-text-stroke:0">2</div>
<svg style="left:1457.4px;top:297.386px" width="10" height="7.8" viewBox="0 0 10 7.8"><path d="M0.2 3.9L1.7 2.4L3.7 4.4L8.3 0L9.8 1.5L3.7 7.6Z" fill="#378137"/></svg>
<svg style="left:1521.1px;top:297.386px" width="10" height="7.8" viewBox="0 0 10 7.8"><path d="M0.2 3.9L1.7 2.4L3.7 4.4L8.3 0L9.8 1.5L3.7 7.6Z" fill="#378137"/></svg>
<div class="t" style="left:1607.60px;top:297.35px;font-size:10.2px;line-height:10.2px;color:#333;font-weight:400;">--</div>
<svg style="left:1774.45px;top:295.936px" width="10.5" height="10.5" viewBox="0 0 10.5 10.5"><circle cx="5.25" cy="5.25" r="5.25" fill="#a52a2a"/><path d="M3.1 3.1L7.4 7.4M7.4 3.1L3.1 7.4" stroke="#fff" stroke-width="1.7"/></svg>
<svg style="left:1836px;top:297.386px" width="10" height="7.8" viewBox="0 0 10 7.8"><path d="M0.2 3.9L1.7 2.4L3.7 4.4L8.3 0L9.8 1.5L3.7 7.6Z" fill="#378137"/></svg>
<div class="t" style="left:1971.30px;top:297.35px;font-size:10.2px;line-height:10.2px;color:#333;font-weight:400;">1</div>
<div class="a" style="left:14px;top:322.572px;width:1974.5px;height:35.286px;background:#f9f9f9"></div>
<div class="a" style="left:14px;top:322.572px;width:1974.5px;height:1px;background:#dddddd"></div>
<div class="t" style="left:20.40px;top:332.64px;font-size:10.2px;line-height:10.2px;color:#333;font-weight:400;">3</div>
<div class="a" style="left:57.2px;top:335.272px;width:9.6px;height:9.3px;border-radius:2.5px;border:1px solid #a0a0a0;background:linear-gradient(#fff,#f3f3f3)"></div>
<div class="t" style="left:92.70px;top:332.64px;font-size:10.2px;line-height:10.2px;color:#333;font-weight:400;">address</div>
<div class="t" style="left:222.90px;top:332.64px;font-size:10.2px;line-height:10.2px;color:#3673b3;font-weight:400;">address_firstname</div>
<div class="t" style="left:530.90px;top:332.64px;font-size:10.2px;line-height:10.2px;color:#333;font-weight:400;">Vorname <span style="font-size:6.5px;position:relative;top:-1.6px">*</span></div>
<div class="t" style="left:1009.90px;top:332.64px;font-size:10.2px;line-height:10.2px;color:#333;font-weight:400;">Text</div>
<svg style="left:1303px;top:332.672px" width="10" height="7.8" viewBox="0 0 10 7.8"><path d="M0.2 3.9L1.7 2.4L3.7 4.4L8.3 0L9.8 1.5L3.7 7.6Z" fill="#378137"/></svg>
<div class="a" style="left:1351.3px;top:333.872px;width:20px;height:14.1px;border-radius:3px;background:linear-gradient(#fff,#e6e6e6);border:1px solid #c4c4c4;border-bottom-color:#a5a5a5"></div><svg style="left:1357.3px;top:338.172px" width="8" height="6" viewBox="0 0 8 6"><path d="M1 4.6L4 1.6L7 4.6" stroke="#222" stroke-width="1.7" fill="none"/></svg>
<div class="a" style="left:1374.6px;top:333.872px;width:20px;height:14.1px;border-radius:3px;background:linear-gradient(#fff,#e6e6e6);border:1px solid #c4c4c4;border-bottom-color:#a5a5a5"></div><svg style="left:1380.6px;top:338.172px" width="8" height="6" viewBox="0 0 8 6"><path d="M1 1.4L4 4.4L7 1.4" stroke="#222" stroke-width="1.7" fill="none"/></svg>
<div class="a" style="left:1398.2px;top:330.172px;width:26.4px;height:21.8px;border-radius:3px;background:#fff;border:1px solid #ccc"></div><div class="t" style="left:1398.2px;top:335.77200000000005px;width:26.4px;text-align:center;font-size:9.8px;line-height:11px;color:#666;-webkit-text-stroke:0">3</div>
<svg style="left:1457.4px;top:332.672px" width="10" height="7.8" viewBox="0 0 10 7.8"><path d="M0.2 3.9L1.7 2.4L3.7 4.4L8.3 0L9.8 1.5L3.7 7.6Z" fill="#378137"/></svg>
<svg style="left:1521.1px;top:332.672px" width="10" height="7.8" viewBox="0 0 10 7.8"><path d="M0.2 3.9L1.7 2.4L3.7 4.4L8.3 0L9.8 1.5L3.7 7.6Z" fill="#378137"/></svg>
<div class="t" style="left:1607.60px;top:332.64px;font-size:10.2px;line-height:10.2px;color:#333;font-weight:400;">--</div>
<svg style="left:1774.7px;top:332.672px" width="10" height="7.8" viewBox="0 0 10 7.8"><path d="M0.2 3.9L1.7 2.4L3.7 4.4L8.3 0L9.8 1.5L3.7 7.6Z" fill="#378137"/></svg>
<svg style="left:1836px;top:332.672px" width="10" height="7.8" viewBox="0 0 10 7.8"><path d="M0.2 3.9L1.7 2.4L3.7 4.4L8.3 0L9.8 1.5L3.7 7.6Z" fill="#378137"/></svg>
<div class="t" style="left:1971.30px;top:332.64px;font-size:10.2px;line-height:10.2px;color:#333;font-weight:400;">2</div>
<div class="a" style="left:14px;top:357.858px;width:1974.5px;height:35.286px;background:#ffffff"></div>
<div class="a" style="left:14px;top:357.858px;width:1974.5px;height:1px;background:#dddddd"></div>
<div class="t" style="left:20.40px;top:367.92px;font-size:10.2px;line-height:10.2px;color:#333;font-weight:400;">4</div>
<div class="a" style="left:57.2px;top:370.558px;width:9.6px;height:9.3px;border-radius:2.5px;border:1px solid #a0a0a0;background:linear-gradient(#fff,#f3f3f3)"></div>
<div class="t" style="left:92.70px;top:367.92px;font-size:10.2px;line-height:10.2px;color:#333;font-weight:400;">address</div>
<div class="t" style="left:222.90px;top:367.92px;font-size:10.2px;line-height:10.2px;color:#3673b3;font-weight:400;">address_lastname</div>
<div class="t" style="left:530.90px;top:367.92px;font-size:10.2px;line-height:10.2px;color:#333;font-weight:400;">Nachname <span style="font-size:6.5px;position:relative;top:-1.6px">*</span></div>
<div class="t" style="left:1009.90px;top:367.92px;font-size:10.2px;line-height:10.2px;color:#333;font-weight:400;">Text</div>
<svg style="left:1303px;top:367.958px" width="10" height="7.8" viewBox="0 0 10 7.8"><path d="M0.2 3.9L1.7 2.4L3.7 4.4L8.3 0L9.8 1.5L3.7 7.6Z" fill="#378137"/></svg>
<div class="a" style="left:1351.3px;top:369.158px;width:20px;height:14.1px;border-radius:3px;background:linear-gradient(#fff,#e6e6e6);border:1px solid #c4c4c4;border-bottom-color:#a5a5a5"></div><svg style="left:1357.3px;top:373.458px" width="8" height="6" viewBox="0 0 8 6"><path d="M1 4.6L4 1.6L7 4.6" stroke="#222" stroke-width="1.7" fill="none"/></svg>
<div class="a" style="left:1374.6px;top:369.158px;width:20px;height:14.1px;border-radius:3px;background:linear-gradient(#fff,#e6e6e6);border:1px solid #c4c4c4;border-bottom-color:#a5a5a5"></div><svg style="left:1380.6px;top:373.458px" width="8" height="6" viewBox="0 0 8 6"><path d="M1 1.4L4 4.4L7 1.4" stroke="#222" stroke-width="1.7" fill="none"/></svg>
<div class="a" style="left:1398.2px;top:365.458px;width:26.4px;height:21.8px;border-radius:3px;background:#fff;border:1px solid #ccc"></div><div class="t" style="left:1398.2px;top:371.05800000000005px;width:26.4px;text-align:center;font-size:9.8px;line-height:11px;color:#666;-webkit-text-stroke:0">5</div>
<svg style="left:1457.4px;top:367.958px" width="10" height="7.8" viewBox="0 0 10 7.8"><path d="M0.2 3.9L1.7 2.4L3.7 4.4L8.3 0L9.8 1.5L3.7 7.6Z" fill="#378137"/></svg>
<svg style="left:1521.1px;top:367.958px" width="10" height="7.8" viewBox="0 0 10 7.8"><path d="M0.2 3.9L1.7 2.4L3.7 4.4L8.3 0L9.8 1.5L3.7 7.6Z" fill="#378137"/></svg>
<div class="t" style="left:1607.60px;top:367.92px;font-size:10.2px;line-height:10.2px;color:#333;font-weight:400;">--</div>
<svg style="left:1774.7px;top:367.958px" width="10" height="7.8" viewBox="0 0 10 7.8"><path d="M0.2 3.9L1.7 2.4L3.7 4.4L8.3 0L9.8 1.5L3.7 7.6Z" fill="#378137"/></svg>
<svg style="left:1836px;top:367.958px" width="10" height="7.8" viewBox="0 0 10 7.8"><path d="M0.2 3.9L1.7 2.4L3.7 4.4L8.3 0L9.8 1.5L3.7 7.6Z" fill="#378137"/></svg>
<div class="t" style="left:1971.30px;top:367.92px;font-size:10.2px;line-height:10.2px;color:#333;font-weight:400;">4</div>
<div class="a" style="left:14px;top:393.144px;width:1974.5px;height:35.286px;background:#f9f9f9"></div>
<div class="a" style="left:14px;top:393.144px;width:1974.5px;height:1px;background:#dddddd"></div>
<div class="t" style="left:20.40px;top:403.21px;font-size:10.2px;line-height:10.2px;color:#333;font-weight:400;">5</div>
<div class="a" style="left:57.2px;top:405.844px;width:9.6px;height:9.3px;border-radius:2.5px;border:1px solid #a0a0a0;background:linear-gradient(#fff,#f3f3f3)"></div>
<div class="t" style="left:92.70px;top:403.21px;font-size:10.2px;line-height:10.2px;color:#333;font-weight:400;">address</div>
<div class="t" style="left:222.90px;top:403.21px;font-size:10.2px;line-height:10.2px;color:#3673b3;font-weight:400;">address_company</div>
<div class="t" style="left:530.90px;top:403.21px;font-size:10.2px;line-height:10.2px;color:#333;font-weight:400;">Firma</div>
<div class="t" style="left:1009.90px;top:403.21px;font-size:10.2px;line-height:10.2px;color:#333;font-weight:400;">Text</div>
<svg style="left:1302.75px;top:401.794px" width="10.5" height="10.5" viewBox="0 0 10.5 10.5"><circle cx="5.25" cy="5.25" r="5.25" fill="#a52a2a"/><path d="M3.1 3.1L7.4 7.4M7.4 3.1L3.1 7.4" stroke="#fff" stroke-width="1.7"/></svg>
<div class="a" style="left:1351.3px;top:404.444px;width:20px;height:14.1px;border-radius:3px;background:linear-gradient(#fff,#e6e6e6);border:1px solid #c4c4c4;border-bottom-color:#a5a5a5"></div><svg style="left:1357.3px;top:408.744px" width="8" height="6" viewBox="0 0 8 6"><path d="M1 4.6L4 1.6L7 4.6" stroke="#222" stroke-width="1.7" fill="none"/></svg>
<div class="a" style="left:1374.6px;top:404.444px;width:20px;height:14.1px;border-radius:3px;background:linear-gradient(#fff,#e6e6e6);border:1px solid #c4c4c4;border-bottom-color:#a5a5a5"></div><svg style="left:1380.6px;top:408.744px" width="8" height="6" viewBox="0 0 8 6"><path d="M1 1.4L4 4.4L7 1.4" stroke="#222" stroke-width="1.7" fill="none"/></svg>
<div class="a" style="left:1398.2px;top:400.744px;width:26.4px;height:21.8px;border-radius:3px;background:#fff;border:1px solid #ccc"></div><div class="t" style="left:1398.2px;top:406.34400000000005px;width:26.4px;text-align:center;font-size:9.8px;line-height:11px;color:#666;-webkit-text-stroke:0">5</div>
<svg style="left:1457.4px;top:403.244px" width="10" height="7.8" viewBox="0 0 10 7.8"><path d="M0.2 3.9L1.7 2.4L3.7 4.4L8.3 0L9.8 1.5L3.7 7.6Z" fill="#378137"/></svg>
<svg style="left:1521.1px;top:403.244px" width="10" height="7.8" viewBox="0 0 10 7.8"><path d="M0.2 3.9L1.7 2.4L3.7 4.4L8.3 0L9.8 1.5L3.7 7.6Z" fill="#378137"/></svg>
<div class="t" style="left:1607.60px;top:403.21px;font-size:10.2px;line-height:10.2px;color:#333;font-weight:400;">--</div>
<svg style="left:1774.7px;top:403.244px" width="10" height="7.8" viewBox="0 0 10 7.8"><path d="M0.2 3.9L1.7 2.4L3.7 4.4L8.3 0L9.8 1.5L3.7 7.6Z" fill="#378137"/></svg>
<svg style="left:1836px;top:403.244px" width="10" height="7.8" viewBox="0 0 10 7.8"><path d="M0.2 3.9L1.7 2.4L3.7 4.4L8.3 0L9.8 1.5L3.7 7.6Z" fill="#378137"/></svg>
<div class="t" style="left:1971.30px;top:403.21px;font-size:10.2px;line-height:10.2px;color:#333;font-weight:400;">5</div>
<div class="a" style="left:14px;top:428.430px;width:1974.5px;height:35.286px;background:#ffffff"></div>
<div class="a" style="left:14px;top:428.430px;width:1974.5px;height:1px;background:#dddddd"></div>
<div class="t" style="left:20.40px;top:438.50px;font-size:10.2px;line-height:10.2px;color:#333;font-weight:400;">6</div>
<div class="a" style="left:57.2px;top:441.13px;width:9.6px;height:9.3px;border-radius:2.5px;border:1px solid #a0a0a0;background:linear-gradient(#fff,#f3f3f3)"></div>
<div class="t" style="left:92.70px;top:438.50px;font-size:10.2px;line-height:10.2px;color:#333;font-weight:400;">address</div>
<div class="t" style="left:222.90px;top:438.50px;font-size:10.2px;line-height:10.2px;color:#3673b3;font-weight:400;">address_street</div>
<div class="t" style="left:530.90px;top:438.50px;font-size:10.2px;line-height:10.2px;color:#333;font-weight:400;">Straße <span style="font-size:6.5px;position:relative;top:-1.6px">*</span></div>
<div class="t" style="left:1009.90px;top:438.50px;font-size:10.2px;line-height:10.2px;color:#333;font-weight:400;">Text</div>
<svg style="left:1303px;top:438.53000000000003px" width="10" height="7.8" viewBox="0 0 10 7.8"><path d="M0.2 3.9L1.7 2.4L3.7 4.4L8.3 0L9.8 1.5L3.7 7.6Z" fill="#378137"/></svg>
<div class="a" style="left:1351.3px;top:439.73px;width:20px;height:14.1px;border-radius:3px;background:linear-gradient(#fff,#e6e6e6);border:1px solid #c4c4c4;border-bottom-color:#a5a5a5"></div><svg style="left:1357.3px;top:444.03000000000003px" width="8" height="6" viewBox="0 0 8 6"><path d="M1 4.6L4 1.6L7 4.6" stroke="#222" stroke-width="1.7" fill="none"/></svg>
<div class="a" style="left:1374.6px;top:439.73px;width:20px;height:14.1px;border-radius:3px;background:linear-gradient(#fff,#e6e6e6);border:1px solid #c4c4c4;border-bottom-color:#a5a5a5"></div><svg style="left:1380.6px;top:444.03000000000003px" width="8" height="6" viewBox="0 0 8 6"><path d="M1 1.4L4 4.4L7 1.4" stroke="#222" stroke-width="1.7" fill="none"/></svg>
<div class="a" style="left:1398.2px;top:436.03000000000003px;width:26.4px;height:21.8px;border-radius:3px;background:#fff;border:1px solid #ccc"></div><div class="t" style="left:1398.2px;top:441.63000000000005px;width:26.4px;text-align:center;font-size:9.8px;line-height:11px;color:#666;-webkit-text-stroke:0">7</div>
<svg style="left:1457.4px;top:438.53000000000003px" width="10" height="7.8" viewBox="0 0 10 7.8"><path d="M0.2 3.9L1.7 2.4L3.7 4.4L8.3 0L9.8 1.5L3.7 7.6Z" fill="#378137"/></svg>
<svg style="left:1521.1px;top:438.53000000000003px" width="10" height="7.8" viewBox="0 0 10 7.8"><path d="M0.2 3.9L1.7 2.4L3.7 4.4L8.3 0L9.8 1.5L3.7 7.6Z" fill="#378137"/></svg>
<div class="t" style="left:1607.60px;top:438.50px;font-size:10.2px;line-height:10.2px;color:#333;font-weight:400;">--</div>
<svg style="left:1774.7px;top:438.53000000000003px" width="10" height="7.8" viewBox="0 0 10 7.8"><path d="M0.2 3.9L1.7 2.4L3.7 4.4L8.3 0L9.8 1.5L3.7 7.6Z" fill="#378137"/></svg>
<svg style="left:1836px;top:438.53000000000003px" width="10" height="7.8" viewBox="0 0 10 7.8"><path d="M0.2 3.9L1.7 2.4L3.7 4.4L8.3 0L9.8 1.5L3.7 7.6Z" fill="#378137"/></svg>
<div class="t" style="left:1971.30px;top:438.50px;font-size:10.2px;line-height:10.2px;color:#333;font-weight:400;">6</div>
<div class="a" style="left:14px;top:463.716px;width:1974.5px;height:35.286px;background:#f9f9f9"></div>
<div class="a" style="left:14px;top:463.716px;width:1974.5px;height:1px;background:#dddddd"></div>
<div class="t" style="left:20.40px;top:473.78px;font-size:10.2px;line-height:10.2px;color:#333;font-weight:400;">7</div>
<div class="a" style="left:57.2px;top:476.416px;width:9.6px;height:9.3px;border-radius:2.5px;border:1px solid #a0a0a0;background:linear-gradient(#fff,#f3f3f3)"></div>
<div class="t" style="left:92.70px;top:473.78px;font-size:10.2px;line-height:10.2px;color:#333;font-weight:400;">address</div>
<div class="t" style="left:222.90px;top:473.78px;font-size:10.2px;line-height:10.2px;color:#3673b3;font-weight:400;">address_street2</div>
<div class="t" style="left:530.90px;top:473.78px;font-size:10.2px;line-height:10.2px;color:#333;font-weight:400;">Complement</div>
<div class="t" style="left:1009.90px;top:473.78px;font-size:10.2px;line-height:10.2px;color:#333;font-weight:400;">Text</div>
<svg style="left:1302.75px;top:472.366px" width="10.5" height="10.5" viewBox="0 0 10.5 10.5"><circle cx="5.25" cy="5.25" r="5.25" fill="#a52a2a"/><path d="M3.1 3.1L7.4 7.4M7.4 3.1L3.1 7.4" stroke="#fff" stroke-width="1.7"/></svg>
<div class="a" style="left:1351.3px;top:475.016px;width:20px;height:14.1px;border-radius:3px;background:linear-gradient(#fff,#e6e6e6);border:1px solid #c4c4c4;border-bottom-color:#a5a5a5"></div><svg style="left:1357.3px;top:479.31600000000003px" width="8" height="6" viewBox="0 0 8 6"><path d="M1 4.6L4 1.6L7 4.6" stroke="#222" stroke-width="1.7" fill="none"/></svg>
<div class="a" style="left:1374.6px;top:475.016px;width:20px;height:14.1px;border-radius:3px;background:linear-gradient(#fff,#e6e6e6);border:1px solid #c4c4c4;border-bottom-color:#a5a5a5"></div><svg style="left:1380.6px;top:479.31600000000003px" width="8" height="6" viewBox="0 0 8 6"><path d="M1 1.4L4 4.4L7 1.4" stroke="#222" stroke-width="1.7" fill="none"/></svg>
<div class="a" style="left:1398.2px;top:471.31600000000003px;width:26.4px;height:21.8px;border-radius:3px;background:#fff;border:1px solid #ccc"></div><div class="t" style="left:1398.2px;top:476.91600000000005px;width:26.4px;text-align:center;font-size:9.8px;line-height:11px;color:#666;-webkit-text-stroke:0">7</div>
<svg style="left:1457.4px;top:473.81600000000003px" width="10" height="7.8" viewBox="0 0 10 7.8"><path d="M0.2 3.9L1.7 2.4L3.7 4.4L8.3 0L9.8 1.5L3.7 7.6Z" fill="#378137"/></svg>
<svg style="left:1521.1px;top:473.81600000000003px" width="10" height="7.8" viewBox="0 0 10 7.8"><path d="M0.2 3.9L1.7 2.4L3.7 4.4L8.3 0L9.8 1.5L3.7 7.6Z" fill="#378137"/></svg>
<div class="t" style="left:1607.60px;top:473.78px;font-size:10.2px;line-height:10.2px;color:#333;font-weight:400;">--</div>
<svg style="left:1774.45px;top:472.366px" width="10.5" height="10.5" viewBox="0 0 10.5 10.5"><circle cx="5.25" cy="5.25" r="5.25" fill="#a52a2a"/><path d="M3.1 3.1L7.4 7.4M7.4 3.1L3.1 7.4" stroke="#fff" stroke-width="1.7"/></svg>
<svg style="left:1836px;top:473.81600000000003px" width="10" height="7.8" viewBox="0 0 10 7.8"><path d="M0.2 3.9L1.7 2.4L3.7 4.4L8.3 0L9.8 1.5L3.7 7.6Z" fill="#378137"/></svg>
<div class="t" style="left:1971.30px;top:473.78px;font-size:10.2px;line-height:10.2px;color:#333;font-weight:400;">7</div>
<div class="a" style="left:14px;top:499.002px;width:1974.5px;height:35.286px;background:#ffffff"></div>
<div class="a" style="left:14px;top:499.002px;width:1974.5px;height:1px;background:#dddddd"></div>
<div class="t" style="left:20.40px;top:509.07px;font-size:10.2px;line-height:10.2px;color:#333;font-weight:400;">8</div>
<div class="a" style="left:57.2px;top:511.702px;width:9.6px;height:9.3px;border-radius:2.5px;border:1px solid #a0a0a0;background:linear-gradient(#fff,#f3f3f3)"></div>
<div class="t" style="left:92.70px;top:509.07px;font-size:10.2px;line-height:10.2px;color:#333;font-weight:400;">address</div>
<div class="t" style="left:222.90px;top:509.07px;font-size:10.2px;line-height:10.2px;color:#3673b3;font-weight:400;">address_post_code</div>
<div class="t" style="left:530.90px;top:509.07px;font-size:10.2px;line-height:10.2px;color:#333;font-weight:400;">PLZ <span style="font-size:6.5px;position:relative;top:-1.6px">*</span></div>
<div class="t" style="left:1009.90px;top:509.07px;font-size:10.2px;line-height:10.2px;color:#333;font-weight:400;">Text</div>
<svg style="left:1303px;top:509.10200000000003px" width="10" height="7.8" viewBox="0 0 10 7.8"><path d="M0.2 3.9L1.7 2.4L3.7 4.4L8.3 0L9.8 1.5L3.7 7.6Z" fill="#378137"/></svg>
<div class="a" style="left:1351.3px;top:510.302px;width:20px;height:14.1px;border-radius:3px;background:linear-gradient(#fff,#e6e6e6);border:1px solid #c4c4c4;border-bottom-color:#a5a5a5"></div><svg style="left:1357.3px;top:514.602px" width="8" height="6" viewBox="0 0 8 6"><path d="M1 4.6L4 1.6L7 4.6" stroke="#222" stroke-width="1.7" fill="none"/></svg>
<div class="a" style="left:1374.6px;top:510.302px;width:20px;height:14.1px;border-radius:3px;background:linear-gradient(#fff,#e6e6e6);border:1px solid #c4c4c4;border-bottom-color:#a5a5a5"></div><svg style="left:1380.6px;top:514.602px" width="8" height="6" viewBox="0 0 8 6"><path d="M1 1.4L4 4.4L7 1.4" stroke="#222" stroke-width="1.7" fill="none"/></svg>
<div class="a" style="left:1398.2px;top:506.60200000000003px;width:26.4px;height:21.8px;border-radius:3px;background:#fff;border:1px solid #ccc"></div><div class="t" style="left:1398.2px;top:512.202px;width:26.4px;text-align:center;font-size:9.8px;line-height:11px;color:#666;-webkit-text-stroke:0">8</div>
<svg style="left:1457.4px;top:509.10200000000003px" width="10" height="7.8" viewBox="0 0 10 7.8"><path d="M0.2 3.9L1.7 2.4L3.7 4.4L8.3 0L9.8 1.5L3.7 7.6Z" fill="#378137"/></svg>
<svg style="left:1521.1px;top:509.10200000000003px" width="10" height="7.8" viewBox="0 0 10 7.8"><path d="M0.2 3.9L1.7 2.4L3.7 4.4L8.3 0L9.8 1.5L3.7 7.6Z" fill="#378137"/></svg>
<div class="t" style="left:1607.60px;top:509.07px;font-size:10.2px;line-height:10.2px;color:#333;font-weight:400;">--</div>
<svg style="left:1774.7px;top:509.10200000000003px" width="10" height="7.8" viewBox="0 0 10 7.8"><path d="M0.2 3.9L1.7 2.4L3.7 4.4L8.3 0L9.8 1.5L3.7 7.6Z" fill="#378137"/></svg>
<svg style="left:1836px;top:509.10200000000003px" width="10" height="7.8" viewBox="0 0 10 7.8"><path d="M0.2 3.9L1.7 2.4L3.7 4.4L8.3 0L9.8 1.5L3.7 7.6Z" fill="#378137"/></svg>
<div class="t" style="left:1971.30px;top:509.07px;font-size:10.2px;line-height:10.2px;color:#333;font-weight:400;">8</div>
<div class="a" style="left:14px;top:534.288px;width:1974.5px;height:35.286px;background:#f9f9f9"></div>
<div class="a" style="left:14px;top:534.288px;width:1974.5px;height:1px;background:#dddddd"></div>
<div class="t" style="left:20.40px;top:544.35px;font-size:10.2px;line-height:10.2px;color:#333;font-weight:400;">9</div>
<div class="a" style="left:57.2px;top:546.988px;width:9.6px;height:9.3px;border-radius:2.5px;border:1px solid #a0a0a0;background:linear-gradient(#fff,#f3f3f3)"></div>
<div class="t" style="left:92.70px;top:544.35px;font-size:10.2px;line-height:10.2px;color:#333;font-weight:400;">address</div>
<div class="t" style="left:222.90px;top:544.35px;font-size:10.2px;line-height:10.2px;color:#3673b3;font-weight:400;">address_city</div>
<div class="t" style="left:530.90px;top:544.35px;font-size:10.2px;line-height:10.2px;color:#333;font-weight:400;">Ort <span style="font-size:6.5px;position:relative;top:-1.6px">*</span></div>
<div class="t" style="left:1009.90px;top:544.35px;font-size:10.2px;line-height:10.2px;color:#333;font-weight:400;">Text</div>
<svg style="left:1303px;top:544.388px" width="10" height="7.8" viewBox="0 0 10 7.8"><path d="M0.2 3.9L1.7 2.4L3.7 4.4L8.3 0L9.8 1.5L3.7 7.6Z" fill="#378137"/></svg>
<div class="a" style="left:1351.3px;top:545.588px;width:20px;height:14.1px;border-radius:3px;background:linear-gradient(#fff,#e6e6e6);border:1px solid #c4c4c4;border-bottom-color:#a5a5a5"></div><svg style="left:1357.3px;top:549.8879999999999px" width="8" height="6" viewBox="0 0 8 6"><path d="M1 4.6L4 1.6L7 4.6" stroke="#222" stroke-width="1.7" fill="none"/></svg>
<div class="a" style="left:1374.6px;top:545.588px;width:20px;height:14.1px;border-radius:3px;background:linear-gradient(#fff,#e6e6e6);border:1px solid #c4c4c4;border-bottom-color:#a5a5a5"></div><svg style="left:1380.6px;top:549.8879999999999px" width="8" height="6" viewBox="0 0 8 6"><path d="M1 1.4L4 4.4L7 1.4" stroke="#222" stroke-width="1.7" fill="none"/></svg>
<div class="a" style="left:1398.2px;top:541.888px;width:26.4px;height:21.8px;border-radius:3px;background:#fff;border:1px solid #ccc"></div><div class="t" style="left:1398.2px;top:547.488px;width:26.4px;text-align:center;font-size:9.8px;line-height:11px;color:#666;-webkit-text-stroke:0">9</div>
<svg style="left:1457.4px;top:544.388px" width="10" height="7.8" viewBox="0 0 10 7.8"><path d="M0.2 3.9L1.7 2.4L3.7 4.4L8.3 0L9.8 1.5L3.7 7.6Z" fill="#378137"/></svg>
<svg style="left:1521.1px;top:544.388px" width="10" height="7.8" viewBox="0 0 10 7.8"><path d="M0.2 3.9L1.7 2.4L3.7 4.4L8.3 0L9.8 1.5L3.7 7.6Z" fill="#378137"/></svg>
<div class="t" style="left:1607.60px;top:544.35px;font-size:10.2px;line-height:10.2px;color:#333;font-weight:400;">--</div>
<svg style="left:1774.7px;top:544.388px" width="10" height="7.8" viewBox="0 0 10 7.8"><path d="M0.2 3.9L1.7 2.4L3.7 4.4L8.3 0L9.8 1.5L3.7 7.6Z" fill="#378137"/></svg>
<svg style="left:1836px;top:544.388px" width="10" height="7.8" viewBox="0 0 10 7.8"><path d="M0.2 3.9L1.7 2.4L3.7 4.4L8.3 0L9.8 1.5L3.7 7.6Z" fill="#378137"/></svg>
<div class="t" style="left:1971.30px;top:544.35px;font-size:10.2px;line-height:10.2px;color:#333;font-weight:400;">9</div>
<div class="a" style="left:14px;top:569.574px;width:1974.5px;height:35.286px;background:#ffffff"></div>
<div class="a" style="left:14px;top:569.574px;width:1974.5px;height:1px;background:#dddddd"></div>
<div class="t" style="left:20.40px;top:579.64px;font-size:10.2px;line-height:10.2px;color:#333;font-weight:400;">10</div>
<div class="a" style="left:57.2px;top:582.2740000000001px;width:9.6px;height:9.3px;border-radius:2.5px;border:1px solid #a0a0a0;background:linear-gradient(#fff,#f3f3f3)"></div>
<div class="t" style="left:92.70px;top:579.64px;font-size:10.2px;line-height:10.2px;color:#333;font-weight:400;">address</div>
<div class="t" style="left:222.90px;top:579.64px;font-size:10.2px;line-height:10.2px;color:#3673b3;font-weight:400;">address_telephone</div>
<div class="t" style="left:530.90px;top:579.64px;font-size:10.2px;line-height:10.2px;color:#333;font-weight:400;">Telefon <span style="font-size:6.5px;position:relative;top:-1.6px">*</span></div>
<div class="t" style="left:1009.90px;top:579.64px;font-size:10.2px;line-height:10.2px;color:#333;font-weight:400;">Text</div>
<svg style="left:1303px;top:579.6740000000001px" width="10" height="7.8" viewBox="0 0 10 7.8"><path d="M0.2 3.9L1.7 2.4L3.7 4.4L8.3 0L9.8 1.5L3.7 7.6Z" fill="#378137"/></svg>
<div class="a" style="left:1351.3px;top:580.874px;width:20px;height:14.1px;border-radius:3px;background:linear-gradient(#fff,#e6e6e6);border:1px solid #c4c4c4;border-bottom-color:#a5a5a5"></div><svg style="left:1357.3px;top:585.174px" width="8" height="6" viewBox="0 0 8 6"><path d="M1 4.6L4 1.6L7 4.6" stroke="#222" stroke-width="1.7" fill="none"/></svg>
<div class="a" style="left:1374.6px;top:580.874px;width:20px;height:14.1px;border-radius:3px;background:linear-gradient(#fff,#e6e6e6);border:1px solid #c4c4c4;border-bottom-color:#a5a5a5"></div><svg style="left:1380.6px;top:585.174px" width="8" height="6" viewBox="0 0 8 6"><path d="M1 1.4L4 4.4L7 1.4" stroke="#222" stroke-width="1.7" fill="none"/></svg>
<div class="a" style="left:1398.2px;top:577.1740000000001px;width:26.4px;height:21.8px;border-radius:3px;background:#fff;border:1px solid #ccc"></div><div class="t" style="left:1398.2px;top:582.7740000000001px;width:26.4px;text-align:center;font-size:9.8px;line-height:11px;color:#666;-webkit-text-stroke:0">9</div>
<svg style="left:1457.4px;top:579.6740000000001px" width="10" height="7.8" viewBox="0 0 10 7.8"><path d="M0.2 3.9L1.7 2.4L3.7 4.4L8.3 0L9.8 1.5L3.7 7.6Z" fill="#378137"/></svg>
<svg style="left:1521.1px;top:579.6740000000001px" width="10" height="7.8" viewBox="0 0 10 7.8"><path d="M0.2 3.9L1.7 2.4L3.7 4.4L8.3 0L9.8 1.5L3.7 7.6Z" fill="#378137"/></svg>
<div class="t" style="left:1607.60px;top:579.64px;font-size:10.2px;line-height:10.2px;color:#333;font-weight:400;">--</div>
<svg style="left:1774.7px;top:579.6740000000001px" width="10" height="7.8" viewBox="0 0 10 7.8"><path d="M0.2 3.9L1.7 2.4L3.7 4.4L8.3 0L9.8 1.5L3.7 7.6Z" fill="#378137"/></svg>
<svg style="left:1836px;top:579.6740000000001px" width="10" height="7.8" viewBox="0 0 10 7.8"><path d="M0.2 3.9L1.7 2.4L3.7 4.4L8.3 0L9.8 1.5L3.7 7.6Z" fill="#378137"/></svg>
<div class="t" style="left:1971.30px;top:579.64px;font-size:10.2px;line-height:10.2px;color:#333;font-weight:400;">10</div>
<div class="a" style="left:14px;top:604.860px;width:1974.5px;height:35.286px;background:#f9f9f9"></div>
<div class="a" style="left:14px;top:604.860px;width:1974.5px;height:1px;background:#dddddd"></div>
<div class="t" style="left:20.40px;top:614.93px;font-size:10.2px;line-height:10.2px;color:#333;font-weight:400;">11</div>
<div class="a" style="left:57.2px;top:617.5600000000001px;width:9.6px;height:9.3px;border-radius:2.5px;border:1px solid #a0a0a0;background:linear-gradient(#fff,#f3f3f3)"></div>
<div class="t" style="left:92.70px;top:614.93px;font-size:10.2px;line-height:10.2px;color:#333;font-weight:400;">address</div>
<div class="t" style="left:222.90px;top:614.93px;font-size:10.2px;line-height:10.2px;color:#3673b3;font-weight:400;">address_telephone2</div>
<div class="t" style="left:530.90px;top:614.93px;font-size:10.2px;line-height:10.2px;color:#333;font-weight:400;">Telefon</div>
<div class="t" style="left:1009.90px;top:614.93px;font-size:10.2px;line-height:10.2px;color:#333;font-weight:400;">Text</div>
<svg style="left:1302.75px;top:613.51px" width="10.5" height="10.5" viewBox="0 0 10.5 10.5"><circle cx="5.25" cy="5.25" r="5.25" fill="#a52a2a"/><path d="M3.1 3.1L7.4 7.4M7.4 3.1L3.1 7.4" stroke="#fff" stroke-width="1.7"/></svg>
<div class="a" style="left:1351.3px;top:616.16px;width:20px;height:14.1px;border-radius:3px;background:linear-gradient(#fff,#e6e6e6);border:1px solid #c4c4c4;border-bottom-color:#a5a5a5"></div><svg style="left:1357.3px;top:620.4599999999999px" width="8" height="6" viewBox="0 0 8 6"><path d="M1 4.6L4 1.6L7 4.6" stroke="#222" stroke-width="1.7" fill="none"/></svg>
<div class="a" style="left:1374.6px;top:616.16px;width:20px;height:14.1px;border-radius:3px;background:linear-gradient(#fff,#e6e6e6);border:1px solid #c4c4c4;border-bottom-color:#a5a5a5"></div><svg style="left:1380.6px;top:620.4599999999999px" width="8" height="6" viewBox="0 0 8 6"><path d="M1 1.4L4 4.4L7 1.4" stroke="#222" stroke-width="1.7" fill="none"/></svg>
<div class="a" style="left:1398.2px;top:612.46px;width:26.4px;height:21.8px;border-radius:3px;background:#fff;border:1px solid #ccc"></div><div class="t" style="left:1398.2px;top:618.0600000000001px;width:26.4px;text-align:center;font-size:9.8px;line-height:11px;color:#666;-webkit-text-stroke:0">11</div>
<svg style="left:1457.4px;top:614.96px" width="10" height="7.8" viewBox="0 0 10 7.8"><path d="M0.2 3.9L1.7 2.4L3.7 4.4L8.3 0L9.8 1.5L3.7 7.6Z" fill="#378137"/></svg>
<svg style="left:1521.1px;top:614.96px" width="10" height="7.8" viewBox="0 0 10 7.8"><path d="M0.2 3.9L1.7 2.4L3.7 4.4L8.3 0L9.8 1.5L3.7 7.6Z" fill="#378137"/></svg>
<div class="t" style="left:1607.60px;top:614.93px;font-size:10.2px;line-height:10.2px;color:#333;font-weight:400;">--</div>
<svg style="left:1774.45px;top:613.51px" width="10.5" height="10.5" viewBox="0 0 10.5 10.5"><circle cx="5.25" cy="5.25" r="5.25" fill="#a52a2a"/><path d="M3.1 3.1L7.4 7.4M7.4 3.1L3.1 7.4" stroke="#fff" stroke-width="1.7"/></svg>
<svg style="left:1836px;top:614.96px" width="10" height="7.8" viewBox="0 0 10 7.8"><path d="M0.2 3.9L1.7 2.4L3.7 4.4L8.3 0L9.8 1.5L3.7 7.6Z" fill="#378137"/></svg>
<div class="t" style="left:1971.30px;top:614.93px;font-size:10.2px;line-height:10.2px;color:#333;font-weight:400;">11</div>
<div class="a" style="left:14px;top:640.146px;width:1974.5px;height:35.286px;background:#ffffff"></div>
<div class="a" style="left:14px;top:640.146px;width:1974.5px;height:1px;background:#dddddd"></div>
<div class="t" style="left:20.40px;top:650.21px;font-size:10.2px;line-height:10.2px;color:#333;font-weight:400;">12</div>
<div class="a" style="left:57.2px;top:652.846px;width:9.6px;height:9.3px;border-radius:2.5px;border:1px solid #a0a0a0;background:linear-gradient(#fff,#f3f3f3)"></div>
<div class="t" style="left:92.70px;top:650.21px;font-size:10.2px;line-height:10.2px;color:#333;font-weight:400;">address</div>
<div class="t" style="left:222.90px;top:650.21px;font-size:10.2px;line-height:10.2px;color:#3673b3;font-weight:400;">address_fax</div>
<div class="t" style="left:530.90px;top:650.21px;font-size:10.2px;line-height:10.2px;color:#333;font-weight:400;">Fax</div>
<div class="t" style="left:1009.90px;top:650.21px;font-size:10.2px;line-height:10.2px;color:#333;font-weight:400;">Text</div>
<svg style="left:1302.75px;top:648.7959999999999px" width="10.5" height="10.5" viewBox="0 0 10.5 10.5"><circle cx="5.25" cy="5.25" r="5.25" fill="#a52a2a"/><path d="M3.1 3.1L7.4 7.4M7.4 3.1L3.1 7.4" stroke="#fff" stroke-width="1.7"/></svg>
<div class="a" style="left:1351.3px;top:651.4459999999999px;width:20px;height:14.1px;border-radius:3px;background:linear-gradient(#fff,#e6e6e6);border:1px solid #c4c4c4;border-bottom-color:#a5a5a5"></div><svg style="left:1357.3px;top:655.7459999999999px" width="8" height="6" viewBox="0 0 8 6"><path d="M1 4.6L4 1.6L7 4.6" stroke="#222" stroke-width="1.7" fill="none"/></svg>
<div class="a" style="left:1374.6px;top:651.4459999999999px;width:20px;height:14.1px;border-radius:3px;background:linear-gradient(#fff,#e6e6e6);border:1px solid #c4c4c4;border-bottom-color:#a5a5a5"></div><svg style="left:1380.6px;top:655.7459999999999px" width="8" height="6" viewBox="0 0 8 6"><path d="M1 1.4L4 4.4L7 1.4" stroke="#222" stroke-width="1.7" fill="none"/></svg>
<div class="a" style="left:1398.2px;top:647.746px;width:26.4px;height:21.8px;border-radius:3px;background:#fff;border:1px solid #ccc"></div><div class="t" style="left:1398.2px;top:653.346px;width:26.4px;text-align:center;font-size:9.8px;line-height:11px;color:#666;-webkit-text-stroke:0">12</div>
<svg style="left:1457.4px;top:650.246px" width="10" height="7.8" viewBox="0 0 10 7.8"><path d="M0.2 3.9L1.7 2.4L3.7 4.4L8.3 0L9.8 1.5L3.7 7.6Z" fill="#378137"/></svg>
<svg style="left:1521.1px;top:650.246px" width="10" height="7.8" viewBox="0 0 10 7.8"><path d="M0.2 3.9L1.7 2.4L3.7 4.4L8.3 0L9.8 1.5L3.7 7.6Z" fill="#378137"/></svg>
<div class="t" style="left:1607.60px;top:650.21px;font-size:10.2px;line-height:10.2px;color:#333;font-weight:400;">--</div>
<svg style="left:1774.45px;top:648.7959999999999px" width="10.5" height="10.5" viewBox="0 0 10.5 10.5"><circle cx="5.25" cy="5.25" r="5.25" fill="#a52a2a"/><path d="M3.1 3.1L7.4 7.4M7.4 3.1L3.1 7.4" stroke="#fff" stroke-width="1.7"/></svg>
<svg style="left:1836px;top:650.246px" width="10" height="7.8" viewBox="0 0 10 7.8"><path d="M0.2 3.9L1.7 2.4L3.7 4.4L8.3 0L9.8 1.5L3.7 7.6Z" fill="#378137"/></svg>
<div class="t" style="left:1971.30px;top:650.21px;font-size:10.2px;line-height:10.2px;color:#333;font-weight:400;">12</div>
<div class="a" style="left:14px;top:675.432px;width:1974.5px;height:35.286px;background:#f9f9f9"></div>
<div class="a" style="left:14px;top:675.432px;width:1974.5px;height:1px;background:#dddddd"></div>
<div class="t" style="left:20.40px;top:685.50px;font-size:10.2px;line-height:10.2px;color:#333;font-weight:400;">13</div>
<div class="a" style="left:57.2px;top:688.1320000000001px;width:9.6px;height:9.3px;border-radius:2.5px;border:1px solid #a0a0a0;background:linear-gradient(#fff,#f3f3f3)"></div>
<div class="t" style="left:92.70px;top:685.50px;font-size:10.2px;line-height:10.2px;color:#333;font-weight:400;">address</div>
<div class="t" style="left:222.90px;top:685.50px;font-size:10.2px;line-height:10.2px;color:#3673b3;font-weight:400;">address_country</div>
<div class="t" style="left:530.90px;top:685.50px;font-size:10.2px;line-height:10.2px;color:#333;font-weight:400;">Land</div>
<div class="t" style="left:1009.90px;top:685.50px;font-size:10.2px;line-height:10.2px;color:#333;font-weight:400;">Zone</div>
<svg style="left:1302.75px;top:684.082px" width="10.5" height="10.5" viewBox="0 0 10.5 10.5"><circle cx="5.25" cy="5.25" r="5.25" fill="#a52a2a"/><path d="M3.1 3.1L7.4 7.4M7.4 3.1L3.1 7.4" stroke="#fff" stroke-width="1.7"/></svg>
<div class="a" style="left:1351.3px;top:686.732px;width:20px;height:14.1px;border-radius:3px;background:linear-gradient(#fff,#e6e6e6);border:1px solid #c4c4c4;border-bottom-color:#a5a5a5"></div><svg style="left:1357.3px;top:691.0319999999999px" width="8" height="6" viewBox="0 0 8 6"><path d="M1 4.6L4 1.6L7 4.6" stroke="#222" stroke-width="1.7" fill="none"/></svg>
<div class="a" style="left:1374.6px;top:686.732px;width:20px;height:14.1px;border-radius:3px;background:linear-gradient(#fff,#e6e6e6);border:1px solid #c4c4c4;border-bottom-color:#a5a5a5"></div><svg style="left:1380.6px;top:691.0319999999999px" width="8" height="6" viewBox="0 0 8 6"><path d="M1 1.4L4 4.4L7 1.4" stroke="#222" stroke-width="1.7" fill="none"/></svg>
<div class="a" style="left:1398.2px;top:683.032px;width:26.4px;height:21.8px;border-radius:3px;background:#fff;border:1px solid #ccc"></div><div class="t" style="left:1398.2px;top:688.6320000000001px;width:26.4px;text-align:center;font-size:9.8px;line-height:11px;color:#666;-webkit-text-stroke:0">13</div>
<svg style="left:1457.4px;top:685.532px" width="10" height="7.8" viewBox="0 0 10 7.8"><path d="M0.2 3.9L1.7 2.4L3.7 4.4L8.3 0L9.8 1.5L3.7 7.6Z" fill="#378137"/></svg>
<svg style="left:1521.1px;top:685.532px" width="10" height="7.8" viewBox="0 0 10 7.8"><path d="M0.2 3.9L1.7 2.4L3.7 4.4L8.3 0L9.8 1.5L3.7 7.6Z" fill="#378137"/></svg>
<div class="t" style="left:1607.60px;top:685.50px;font-size:10.2px;line-height:10.2px;color:#333;font-weight:400;">--</div>
<svg style="left:1774.7px;top:685.532px" width="10" height="7.8" viewBox="0 0 10 7.8"><path d="M0.2 3.9L1.7 2.4L3.7 4.4L8.3 0L9.8 1.5L3.7 7.6Z" fill="#378137"/></svg>
<svg style="left:1836px;top:685.532px" width="10" height="7.8" viewBox="0 0 10 7.8"><path d="M0.2 3.9L1.7 2.4L3.7 4.4L8.3 0L9.8 1.5L3.7 7.6Z" fill="#378137"/></svg>
<div class="t" style="left:1971.30px;top:685.50px;font-size:10.2px;line-height:10.2px;color:#333;font-weight:400;">13</div>
<div class="a" style="left:14px;top:710.718px;width:1974.5px;height:35.286px;background:#ffffff"></div>
<div class="a" style="left:14px;top:710.718px;width:1974.5px;height:1px;background:#dddddd"></div>
<div class="t" style="left:20.40px;top:720.78px;font-size:10.2px;line-height:10.2px;color:#333;font-weight:400;">14</div>
<div class="a" style="left:57.2px;top:723.4180000000001px;width:9.6px;height:9.3px;border-radius:2.5px;border:1px solid #a0a0a0;background:linear-gradient(#fff,#f3f3f3)"></div>
<div class="t" style="left:92.70px;top:720.78px;font-size:10.2px;line-height:10.2px;color:#333;font-weight:400;">address</div>
<div class="t" style="left:222.90px;top:720.78px;font-size:10.2px;line-height:10.2px;color:#3673b3;font-weight:400;">address_state</div>
<div class="t" style="left:530.90px;top:720.78px;font-size:10.2px;line-height:10.2px;color:#333;font-weight:400;">Kanton</div>
<div class="t" style="left:1009.90px;top:720.78px;font-size:10.2px;line-height:10.2px;color:#333;font-weight:400;">Zone</div>
<svg style="left:1302.75px;top:719.368px" width="10.5" height="10.5" viewBox="0 0 10.5 10.5"><circle cx="5.25" cy="5.25" r="5.25" fill="#a52a2a"/><path d="M3.1 3.1L7.4 7.4M7.4 3.1L3.1 7.4" stroke="#fff" stroke-width="1.7"/></svg>
<div class="a" style="left:1351.3px;top:722.018px;width:20px;height:14.1px;border-radius:3px;background:linear-gradient(#fff,#e6e6e6);border:1px solid #c4c4c4;border-bottom-color:#a5a5a5"></div><svg style="left:1357.3px;top:726.318px" width="8" height="6" viewBox="0 0 8 6"><path d="M1 4.6L4 1.6L7 4.6" stroke="#222" stroke-width="1.7" fill="none"/></svg>
<div class="a" style="left:1374.6px;top:722.018px;width:20px;height:14.1px;border-radius:3px;background:linear-gradient(#fff,#e6e6e6);border:1px solid #c4c4c4;border-bottom-color:#a5a5a5"></div><svg style="left:1380.6px;top:726.318px" width="8" height="6" viewBox="0 0 8 6"><path d="M1 1.4L4 4.4L7 1.4" stroke="#222" stroke-width="1.7" fill="none"/></svg>
<div class="a" style="left:1398.2px;top:718.3180000000001px;width:26.4px;height:21.8px;border-radius:3px;background:#fff;border:1px solid #ccc"></div><div class="t" style="left:1398.2px;top:723.9180000000001px;width:26.4px;text-align:center;font-size:9.8px;line-height:11px;color:#666;-webkit-text-stroke:0">14</div>
<svg style="left:1457.4px;top:720.8180000000001px" width="10" height="7.8" viewBox="0 0 10 7.8"><path d="M0.2 3.9L1.7 2.4L3.7 4.4L8.3 0L9.8 1.5L3.7 7.6Z" fill="#378137"/></svg>
<svg style="left:1521.1px;top:720.8180000000001px" width="10" height="7.8" viewBox="0 0 10 7.8"><path d="M0.2 3.9L1.7 2.4L3.7 4.4L8.3 0L9.8 1.5L3.7 7.6Z" fill="#378137"/></svg>
<div class="t" style="left:1607.60px;top:720.78px;font-size:10.2px;line-height:10.2px;color:#333;font-weight:400;">--</div>
<svg style="left:1774.7px;top:720.8180000000001px" width="10" height="7.8" viewBox="0 0 10 7.8"><path d="M0.2 3.9L1.7 2.4L3.7 4.4L8.3 0L9.8 1.5L3.7 7.6Z" fill="#378137"/></svg>
<svg style="left:1836px;top:720.8180000000001px" width="10" height="7.8" viewBox="0 0 10 7.8"><path d="M0.2 3.9L1.7 2.4L3.7 4.4L8.3 0L9.8 1.5L3.7 7.6Z" fill="#378137"/></svg>
<div class="t" style="left:1971.30px;top:720.78px;font-size:10.2px;line-height:10.2px;color:#333;font-weight:400;">14</div>
<div class="a" style="left:14px;top:746.004px;width:1974.5px;height:35.286px;background:#f9f9f9"></div>
<div class="a" style="left:14px;top:746.004px;width:1974.5px;height:1px;background:#dddddd"></div>
<div class="t" style="left:20.40px;top:756.07px;font-size:10.2px;line-height:10.2px;color:#333;font-weight:400;">15</div>
<div class="a" style="left:57.2px;top:758.7040000000001px;width:9.6px;height:9.3px;border-radius:2.5px;border:1px solid #a0a0a0;background:linear-gradient(#fff,#f3f3f3)"></div>
<div class="t" style="left:92.70px;top:756.07px;font-size:10.2px;line-height:10.2px;color:#333;font-weight:400;">address</div>
<div class="t" style="left:222.90px;top:756.07px;font-size:10.2px;line-height:10.2px;color:#3673b3;font-weight:400;">address_vat</div>
<div class="t" style="left:530.90px;top:756.07px;font-size:10.2px;line-height:10.2px;color:#333;font-weight:400;">Umsatzsteuer Identifikationsnummer</div>
<div class="t" style="left:1009.90px;top:756.07px;font-size:10.2px;line-height:10.2px;color:#333;font-weight:400;">Text</div>
<svg style="left:1302.75px;top:754.654px" width="10.5" height="10.5" viewBox="0 0 10.5 10.5"><circle cx="5.25" cy="5.25" r="5.25" fill="#a52a2a"/><path d="M3.1 3.1L7.4 7.4M7.4 3.1L3.1 7.4" stroke="#fff" stroke-width="1.7"/></svg>
<div class="a" style="left:1351.3px;top:757.304px;width:20px;height:14.1px;border-radius:3px;background:linear-gradient(#fff,#e6e6e6);border:1px solid #c4c4c4;border-bottom-color:#a5a5a5"></div><svg style="left:1357.3px;top:761.6039999999999px" width="8" height="6" viewBox="0 0 8 6"><path d="M1 4.6L4 1.6L7 4.6" stroke="#222" stroke-width="1.7" fill="none"/></svg>
<div class="a" style="left:1380.2px;top:753.604px;width:26.4px;height:21.8px;border-radius:3px;background:#fff;border:1px solid #ccc"></div><div class="t" style="left:1380.2px;top:759.2040000000001px;width:26.4px;text-align:center;font-size:9.8px;line-height:11px;color:#666;-webkit-text-stroke:0">15</div>
<svg style="left:1457.4px;top:756.104px" width="10" height="7.8" viewBox="0 0 10 7.8"><path d="M0.2 3.9L1.7 2.4L3.7 4.4L8.3 0L9.8 1.5L3.7 7.6Z" fill="#378137"/></svg>
<svg style="left:1521.1px;top:756.104px" width="10" height="7.8" viewBox="0 0 10 7.8"><path d="M0.2 3.9L1.7 2.4L3.7 4.4L8.3 0L9.8 1.5L3.7 7.6Z" fill="#378137"/></svg>
<div class="t" style="left:1607.60px;top:756.07px;font-size:10.2px;line-height:10.2px;color:#333;font-weight:400;">--</div>
<svg style="left:1774.45px;top:754.654px" width="10.5" height="10.5" viewBox="0 0 10.5 10.5"><circle cx="5.25" cy="5.25" r="5.25" fill="#a52a2a"/><path d="M3.1 3.1L7.4 7.4M7.4 3.1L3.1 7.4" stroke="#fff" stroke-width="1.7"/></svg>
<svg style="left:1836px;top:756.104px" width="10" height="7.8" viewBox="0 0 10 7.8"><path d="M0.2 3.9L1.7 2.4L3.7 4.4L8.3 0L9.8 1.5L3.7 7.6Z" fill="#378137"/></svg>
<div class="t" style="left:1971.30px;top:756.07px;font-size:10.2px;line-height:10.2px;color:#333;font-weight:400;">15</div></div></body></html>
